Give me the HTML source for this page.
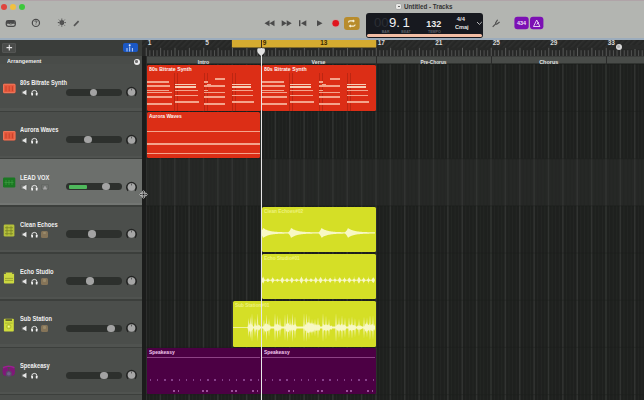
<!DOCTYPE html>
<html><head><meta charset="utf-8"><style>
*{margin:0;padding:0;box-sizing:border-box}
html,body{width:644px;height:400px;overflow:hidden}
body{position:relative;background:#1f211f;font-family:"Liberation Sans",sans-serif}
.a{position:absolute}
.tn{position:absolute;left:20px;font-size:7px;font-weight:bold;color:#f2f2f2;white-space:nowrap;letter-spacing:0}
.btn{position:absolute;width:8px;height:6.5px;border-radius:2px;background:#545554;box-shadow:inset 0 0 0 0.5px #5e5f5e}
.sl{position:absolute;left:66px;width:56px;height:7.5px;border-radius:4px;background:#2d302d}
.kn{position:absolute;width:7.5px;height:7.5px;border-radius:50%;background:#a3a3a3}
.pan{position:absolute;left:126.5px;width:10px;height:10px;border-radius:50%;background:#262626}
.pan i{position:absolute;left:1.5px;top:1.5px;width:7px;height:7px;border-radius:50%;background:#a5a5a5}
.pan b{position:absolute;left:4.5px;top:2px;width:1px;height:2px;background:#555}
.rt{position:absolute;font-size:5.5px;font-weight:bold;white-space:nowrap}
</style></head><body>

<div class="a" style="left:0;top:0;width:644px;height:38px;background:#b3b5b1"></div>
<div class="a" style="left:0;top:0;width:644px;height:1px;background:#b0a4a8"></div>
<div class="a" style="left:0;top:37.6px;width:644px;height:2.4px;background:#9cacbc"></div>
<div class="a" style="left:0;top:39.6px;width:644px;height:0.8px;background:#2c3640"></div>
<div class="a" style="left:1px;top:3.5px;width:6px;height:6px;border-radius:50%;background:#e0443e"></div>
<div class="a" style="left:9.6px;top:3.5px;width:6px;height:6px;border-radius:50%;background:#f2c040"></div>
<div class="a" style="left:18.7px;top:3.5px;width:6px;height:6px;border-radius:50%;background:#3cc83c"></div>
<div class="a" style="left:396.3px;top:3.8px;width:5px;height:5px;border-radius:1.2px;background:#e8e8e6;box-shadow:0 0 0 0.4px #999"></div>
<div class="a" style="left:398px;top:5.5px;width:1.6px;height:1.6px;border-radius:50%;background:#555"></div>
<div class="a" style="left:404.00px;top:3.87px;font-size:6.3px;line-height:1;font-weight:bold;color:#333333;white-space:nowrap;transform:scaleX(0.99);transform-origin:0 0;">Untitled - Tracks</div>
<svg class="a" style="left:0;top:0" width="644" height="38">
<g fill="none" stroke="#4a4a4a" stroke-width="1">
 <rect x="6.3" y="20.6" width="9" height="5.7" rx="1.8" stroke-width="1.3"/>
 <path d="M6.3 23.2 h2.6 q1.9 1.6 3.8 0 h2.6" stroke-width="1.1"/>
 <rect x="6.8" y="20.8" width="8" height="2.2" rx="0.8" fill="#4a4a4a" stroke="none"/>
 <circle cx="35.9" cy="22.9" r="3.6" stroke-width="1.2"/>
 <path d="M34.9 21.8 q0-1 1-1 q1 0 1 0.9 q0 0.6-0.9 1 v0.8 M35.9 24.5 v0.5" stroke-width="0.9"/>
 <circle cx="61.8" cy="22.6" r="2" fill="#555"/>
 <path d="M61.8 18.6 v1.2 M61.8 25.4 v1.2 M57.8 22.6 h1.2 M64.6 22.6 h1.2 M58.9 19.7 l0.8 0.8 M63.9 24.7 l0.8 0.8 M58.9 25.5 l0.8-0.8 M63.9 20.5 l0.8-0.8"/>
 <path d="M74 25.8 l4.6-4.7" stroke-width="1.7" stroke="#555"/>
 <path d="M492.7 26.8 L495.4 24.1 M497.6 19.8 L495.6 23 Q495.6 24.6 497 24 L499.6 22" stroke-width="1.15" stroke="#4e4e4e"/>
</g>
<g fill="#4a4a4a">
 <path d="M264.5 23.2 l5-3 v6z M269.5 23.2 l5-3 v6z"/>
 <path d="M281.7 20.2 l5 3 -5 3z M286.7 20.2 l5 3 -5 3z"/>
 <rect x="299" y="20.2" width="1.4" height="6"/>
 <path d="M306.3 20.2 v6 l-5.3-3z"/>
 <path d="M317 20.2 l5.5 3 -5.5 3z"/>
</g>
<circle cx="335.7" cy="23.3" r="4.2" fill="#cf9a9a" opacity="0.6"/>
<circle cx="335.7" cy="23.3" r="3.3" fill="#e0141e"/>
<rect x="344" y="17" width="15.6" height="13" rx="3" fill="#b88c2c"/>
<g fill="none" stroke="#f6f0d8" stroke-width="1.1">
 <path d="M348.5 22.5 q0-1.6 1.6-1.6 h4 M352.8 19.8 l1.3 1.1 -1.3 1.1"/>
 <path d="M355.1 24.5 q0 1.6 -1.6 1.6 h-4 M350.8 27.2 l-1.3-1.1 1.3-1.1"/>
</g>
<rect x="514.4" y="16.8" width="14.3" height="12.4" rx="3" fill="#7c10b4"/>
<rect x="530" y="16.8" width="13.4" height="12.4" rx="3" fill="#7c10b4"/>
<text x="521.5" y="25.2" font-size="5.4" font-weight="bold" fill="#f0e0f8" text-anchor="middle" font-family="Liberation Sans">434</text>
<g fill="none" stroke="#f0e0f8" stroke-width="0.9"><path d="M533.5 26.5 l3.2-6.5 3.2 6.5z M536.7 24.5 l2-2.5"/></g>
</svg>
<div class="a" style="left:366px;top:13px;width:117px;height:24.5px;border-radius:3px;background:#17191f;overflow:hidden"><div class="a" style="left:0.6px;top:21.3px;width:115.8px;height:2.9px;border-radius:1.5px;background:#f3bea4"></div></div>
<div class="a" style="left:374.00px;top:15.66px;font-size:13.4px;line-height:1;font-weight:normal;color:#2c2f35;white-space:nowrap;transform:scaleX(0.98);transform-origin:0 0;">00</div>
<div class="a" style="left:389.00px;top:15.66px;font-size:13.4px;line-height:1;font-weight:normal;color:#f2f2f2;white-space:nowrap;transform:scaleX(0.98);transform-origin:0 0;">9.&thinsp;1</div>
<div class="a" style="left:381.70px;top:30.55px;font-size:3.6px;line-height:1;font-weight:bold;color:#5c6068;white-space:nowrap;">BAR</div>
<div class="a" style="left:401.30px;top:30.55px;font-size:3.6px;line-height:1;font-weight:bold;color:#5c6068;white-space:nowrap;">BEAT</div>
<div class="a" style="left:426.20px;top:19.58px;font-size:9px;line-height:1;font-weight:bold;color:#ececec;white-space:nowrap;">132</div>
<div class="a" style="left:428.00px;top:30.55px;font-size:3.6px;line-height:1;font-weight:bold;color:#5c6068;white-space:nowrap;">TEMPO</div>
<div class="a" style="left:456.80px;top:17.09px;font-size:5.8px;line-height:1;font-weight:bold;color:#e6e6e6;white-space:nowrap;">4/4</div>
<div class="a" style="left:454.80px;top:23.75px;font-size:6.2px;line-height:1;font-weight:bold;color:#e6e6e6;white-space:nowrap;transform:scaleX(0.9);transform-origin:0 0;">Cmaj</div>
<svg class="a" style="left:476px;top:21px" width="7" height="5"><path d="M1 1 l2.4 2.4 2.4-2.4" fill="none" stroke="#d0d0d0" stroke-width="0.9"/></svg>
<div class="a" style="left:0;top:40px;width:142px;height:16px;background:#3a3d3a"></div>
<div class="a" style="left:2px;top:43px;width:13.5px;height:9.5px;border-radius:2px;background:#4a4c4a;box-shadow:inset 0 0 0 0.6px #5c5e5c"></div>
<svg class="a" style="left:2px;top:43px" width="14" height="10"><path d="M7.3 1.8 v5.6 M4.5 4.6 h5.6" stroke="#e6e6e6" stroke-width="1.1"/></svg>
<div class="a" style="left:122.5px;top:43px;width:15px;height:9px;border-radius:2px;background:#1b58c4"></div>
<svg class="a" style="left:122px;top:43px" width="16" height="10"><circle cx="7.7" cy="2.2" r="1" fill="#e8f0ff"/><path d="M7.7 3.5 v5 M5 5 v3.5 M10.4 5 v3.5" stroke="#cfe0ff" stroke-width="0.9"/></svg>
<div class="a" style="left:0;top:56.3px;width:142px;height:7.5px;background:#494c49"></div>
<div class="a" style="left:6.50px;top:59.01px;font-size:5.9px;line-height:1;font-weight:bold;color:#eeeeee;white-space:nowrap;transform:scaleX(0.94);transform-origin:0 0;">Arrangement</div>
<div class="a" style="left:0;top:63.6px;width:142px;height:1.2px;background:#1e1f1e"></div>
<div class="a" style="left:0;top:64.30px;width:142px;height:47.18px;background:#4b4e4b"></div>
<div class="a" style="left:0;top:108.48px;width:142px;height:2.2px;background:#505350"></div>
<svg class="a" style="left:0;top:0" width="20" height="400"><rect x="3" y="83.69999999999999" width="12.5" height="9.5" rx="1.2" fill="#e65a3e"/><rect x="3.6" y="84.3" width="11.3" height="8.3" rx="0.8" fill="none" stroke="#f08466" stroke-width="0.7"/><path d="M6 86.19999999999999 v5 M9.2 86.19999999999999 v5 M12.4 86.19999999999999 v5" stroke="#c8402a" stroke-width="1"/></svg>
<div class="a" style="left:20.00px;top:80.18px;font-size:6.4px;line-height:1;font-weight:bold;color:#f0f0f0;white-space:nowrap;transform:scaleX(0.9);transform-origin:0 0;">80s Bitrate Synth</div>
<div class="btn" style="left:20px;top:89.4px;background:#4f524f;box-shadow:inset 0 0 0 0.6px #434643"></div><div class="btn" style="left:30.2px;top:89.4px;background:#4f524f;box-shadow:inset 0 0 0 0.6px #434643"></div>
<svg class="a" style="left:20px;top:89.4px" width="20" height="8"><path d="M2.6 2.4 h1.2 l2.6-1.6 v5.4 l-2.6-1.6 h-1.2z" fill="#e8e8e8"/><path d="M11.8 5.2 v-1.2 a2.6 2.6 0 0 1 5.2 0 v1.2" fill="none" stroke="#ececec" stroke-width="0.9"/><rect x="11.3" y="4" width="1.7" height="2.6" rx="0.5" fill="#f4f4f4"/><rect x="15.8" y="4" width="1.7" height="2.6" rx="0.5" fill="#f4f4f4"/></svg>
<div class="sl" style="top:88.6px"></div>
<div class="kn" style="left:89.75px;top:88.6px"></div>
<svg class="a" style="left:125px;top:85.35px" width="13" height="14"><path d="M3.1 10.6 A4.7 4.7 0 1 1 9.9 10.6" fill="none" stroke="#242524" stroke-width="1.7"/><circle cx="6.5" cy="7" r="3.75" fill="#a6a6a6"/><rect x="6" y="3.6" width="1" height="1.8" fill="#5a5a5a"/></svg>
<div class="a" style="left:0;top:111.48px;width:142px;height:47.18px;background:#4b4e4b"></div>
<div class="a" style="left:0;top:155.66px;width:142px;height:2.2px;background:#505350"></div>
<svg class="a" style="left:0;top:0" width="20" height="400"><rect x="3" y="130.88" width="12.5" height="9.5" rx="1.2" fill="#e65a3e"/><rect x="3.6" y="131.48" width="11.3" height="8.3" rx="0.8" fill="none" stroke="#f08466" stroke-width="0.7"/><path d="M6 133.38 v5 M9.2 133.38 v5 M12.4 133.38 v5" stroke="#c8402a" stroke-width="1"/></svg>
<div class="a" style="left:20.00px;top:127.36px;font-size:6.4px;line-height:1;font-weight:bold;color:#f0f0f0;white-space:nowrap;transform:scaleX(0.9);transform-origin:0 0;">Aurora Waves</div>
<div class="btn" style="left:20px;top:136.57999999999998px;background:#4f524f;box-shadow:inset 0 0 0 0.6px #434643"></div><div class="btn" style="left:30.2px;top:136.57999999999998px;background:#4f524f;box-shadow:inset 0 0 0 0.6px #434643"></div>
<svg class="a" style="left:20px;top:136.57999999999998px" width="20" height="8"><path d="M2.6 2.4 h1.2 l2.6-1.6 v5.4 l-2.6-1.6 h-1.2z" fill="#e8e8e8"/><path d="M11.8 5.2 v-1.2 a2.6 2.6 0 0 1 5.2 0 v1.2" fill="none" stroke="#ececec" stroke-width="0.9"/><rect x="11.3" y="4" width="1.7" height="2.6" rx="0.5" fill="#f4f4f4"/><rect x="15.8" y="4" width="1.7" height="2.6" rx="0.5" fill="#f4f4f4"/></svg>
<div class="sl" style="top:135.78px"></div>
<div class="kn" style="left:84.25px;top:135.78px"></div>
<svg class="a" style="left:125px;top:132.53px" width="13" height="14"><path d="M3.1 10.6 A4.7 4.7 0 1 1 9.9 10.6" fill="none" stroke="#242524" stroke-width="1.7"/><circle cx="6.5" cy="7" r="3.75" fill="#a6a6a6"/><rect x="6" y="3.6" width="1" height="1.8" fill="#5a5a5a"/></svg>
<div class="a" style="left:0;top:158.66px;width:142px;height:47.18px;background:#6c6f6c"></div>
<div class="a" style="left:0;top:202.84px;width:142px;height:2.2px;background:#737673"></div>
<svg class="a" style="left:0;top:0" width="20" height="400"><rect x="3" y="177.56" width="12.3" height="10" rx="1.2" fill="#1a7822"/><path d="M6 180.06 v5 M9 180.06 v5 M12 180.06 v5 M4.5 182.56 h9" stroke="#3c9a40" stroke-width="0.8"/></svg>
<div class="a" style="left:20.00px;top:174.54px;font-size:6.4px;line-height:1;font-weight:bold;color:#f0f0f0;white-space:nowrap;transform:scaleX(0.9);transform-origin:0 0;">LEAD VOX</div>
<div class="btn" style="left:20px;top:183.76px;background:#707370;box-shadow:inset 0 0 0 0.6px #5d605d"></div><div class="btn" style="left:30.2px;top:183.76px;background:#707370;box-shadow:inset 0 0 0 0.6px #5d605d"></div>
<svg class="a" style="left:20px;top:183.76px" width="20" height="8"><path d="M2.6 2.4 h1.2 l2.6-1.6 v5.4 l-2.6-1.6 h-1.2z" fill="#e8e8e8"/><path d="M11.8 5.2 v-1.2 a2.6 2.6 0 0 1 5.2 0 v1.2" fill="none" stroke="#ececec" stroke-width="0.9"/><rect x="11.3" y="4" width="1.7" height="2.6" rx="0.5" fill="#f4f4f4"/><rect x="15.8" y="4" width="1.7" height="2.6" rx="0.5" fill="#f4f4f4"/></svg>
<div class="btn" style="left:40.5px;top:183.76px;width:8px;background:#707370;box-shadow:inset 0 0 0 0.6px #5d605d"></div>
<svg class="a" style="left:40.5px;top:183.76px" width="8" height="7"><path d="M2 5.5 h4 l-0.6-2 h-2.8z M3.2 3.5 a0.9 0.9 0 1 1 1.6 0" fill="#a8a8a8"/></svg>
<div class="sl" style="top:182.96px"></div>
<div class="a" style="left:69px;top:184.56px;width:17.5px;height:4.2px;border-radius:1px;background:#4fb85c"></div>
<div class="kn" style="left:102.25px;top:182.96px"></div>
<svg class="a" style="left:125px;top:179.71px" width="13" height="14"><path d="M3.1 10.6 A4.7 4.7 0 1 1 9.9 10.6" fill="none" stroke="#242524" stroke-width="1.7"/><circle cx="6.5" cy="7" r="3.75" fill="#a6a6a6"/><rect x="6" y="3.6" width="1" height="1.8" fill="#5a5a5a"/></svg>
<div class="a" style="left:0;top:205.84px;width:142px;height:47.18px;background:#4b4e4b"></div>
<div class="a" style="left:0;top:250.02px;width:142px;height:2.2px;background:#505350"></div>
<svg class="a" style="left:0;top:0" width="20" height="400"><rect x="3.7" y="224.43999999999997" width="10.7" height="12" rx="1.3" fill="#b4c03a"/><path d="M5 227.73999999999998 h8 M5 230.73999999999998 h8 M5 233.73999999999998 h8 M7 226.23999999999998 v9 M11 226.23999999999998 v9" stroke="#7a8426" stroke-width="0.8"/></svg>
<div class="a" style="left:20.00px;top:221.72px;font-size:6.4px;line-height:1;font-weight:bold;color:#f0f0f0;white-space:nowrap;transform:scaleX(0.9);transform-origin:0 0;">Clean Echoes</div>
<div class="btn" style="left:20px;top:230.93999999999997px;background:#4f524f;box-shadow:inset 0 0 0 0.6px #434643"></div><div class="btn" style="left:30.2px;top:230.93999999999997px;background:#4f524f;box-shadow:inset 0 0 0 0.6px #434643"></div>
<svg class="a" style="left:20px;top:230.93999999999997px" width="20" height="8"><path d="M2.6 2.4 h1.2 l2.6-1.6 v5.4 l-2.6-1.6 h-1.2z" fill="#e8e8e8"/><path d="M11.8 5.2 v-1.2 a2.6 2.6 0 0 1 5.2 0 v1.2" fill="none" stroke="#ececec" stroke-width="0.9"/><rect x="11.3" y="4" width="1.7" height="2.6" rx="0.5" fill="#f4f4f4"/><rect x="15.8" y="4" width="1.7" height="2.6" rx="0.5" fill="#f4f4f4"/></svg>
<div class="a" style="left:40.5px;top:230.63999999999996px;width:7.5px;height:7px;border-radius:1.5px;background:#857458"></div>
<div class="a" style="left:42.5px;top:231.93999999999997px;width:3.5px;height:2.5px;border-radius:1px;background:#9a8a6a"></div>
<div class="sl" style="top:230.14px"></div>
<div class="kn" style="left:88.25px;top:230.14px"></div>
<svg class="a" style="left:125px;top:226.89px" width="13" height="14"><path d="M3.1 10.6 A4.7 4.7 0 1 1 9.9 10.6" fill="none" stroke="#242524" stroke-width="1.7"/><circle cx="6.5" cy="7" r="3.75" fill="#a6a6a6"/><rect x="6" y="3.6" width="1" height="1.8" fill="#5a5a5a"/></svg>
<div class="a" style="left:0;top:253.02px;width:142px;height:47.18px;background:#4b4e4b"></div>
<div class="a" style="left:0;top:297.20px;width:142px;height:2.2px;background:#505350"></div>
<svg class="a" style="left:0;top:0" width="20" height="400"><rect x="3.9" y="272.41999999999996" width="10.2" height="11" rx="1" fill="#ccd840"/><rect x="3.9" y="272.41999999999996" width="2" height="1.4" fill="#4a4b4a"/><rect x="12.1" y="272.41999999999996" width="2" height="1.4" fill="#4a4b4a"/><path d="M5 278.41999999999996 h8 M5 280.41999999999996 h8" stroke="#9aa42e" stroke-width="0.9"/></svg>
<div class="a" style="left:20.00px;top:268.90px;font-size:6.4px;line-height:1;font-weight:bold;color:#f0f0f0;white-space:nowrap;transform:scaleX(0.9);transform-origin:0 0;">Echo Studio</div>
<div class="btn" style="left:20px;top:278.12px;background:#4f524f;box-shadow:inset 0 0 0 0.6px #434643"></div><div class="btn" style="left:30.2px;top:278.12px;background:#4f524f;box-shadow:inset 0 0 0 0.6px #434643"></div>
<svg class="a" style="left:20px;top:278.12px" width="20" height="8"><path d="M2.6 2.4 h1.2 l2.6-1.6 v5.4 l-2.6-1.6 h-1.2z" fill="#e8e8e8"/><path d="M11.8 5.2 v-1.2 a2.6 2.6 0 0 1 5.2 0 v1.2" fill="none" stroke="#ececec" stroke-width="0.9"/><rect x="11.3" y="4" width="1.7" height="2.6" rx="0.5" fill="#f4f4f4"/><rect x="15.8" y="4" width="1.7" height="2.6" rx="0.5" fill="#f4f4f4"/></svg>
<div class="a" style="left:40.5px;top:277.82px;width:7.5px;height:7px;border-radius:1.5px;background:#857458"></div>
<div class="a" style="left:42.5px;top:279.12px;width:3.5px;height:2.5px;border-radius:1px;background:#9a8a6a"></div>
<div class="sl" style="top:277.32px"></div>
<div class="kn" style="left:86.25px;top:277.32px"></div>
<svg class="a" style="left:125px;top:274.07px" width="13" height="14"><path d="M3.1 10.6 A4.7 4.7 0 1 1 9.9 10.6" fill="none" stroke="#242524" stroke-width="1.7"/><circle cx="6.5" cy="7" r="3.75" fill="#a6a6a6"/><rect x="6" y="3.6" width="1" height="1.8" fill="#5a5a5a"/></svg>
<div class="a" style="left:0;top:300.20px;width:142px;height:47.18px;background:#4b4e4b"></div>
<div class="a" style="left:0;top:344.38px;width:142px;height:2.2px;background:#505350"></div>
<svg class="a" style="left:0;top:0" width="20" height="400"><rect x="3.9" y="318.7" width="9.9" height="12.9" rx="0.8" fill="#d0dc3c"/><rect x="5.5" y="319.4" width="6.5" height="1.3" fill="#3a3a20"/><path d="M5 323.09999999999997 h7.5" stroke="#9aa42e" stroke-width="0.7"/><circle cx="8.8" cy="326.59999999999997" r="2.2" fill="none" stroke="#a4ae30" stroke-width="0.7"/><circle cx="8.8" cy="326.59999999999997" r="0.9" fill="#f0f8a0"/></svg>
<div class="a" style="left:20.00px;top:316.08px;font-size:6.4px;line-height:1;font-weight:bold;color:#f0f0f0;white-space:nowrap;transform:scaleX(0.9);transform-origin:0 0;">Sub Station</div>
<div class="btn" style="left:20px;top:325.3px;background:#4f524f;box-shadow:inset 0 0 0 0.6px #434643"></div><div class="btn" style="left:30.2px;top:325.3px;background:#4f524f;box-shadow:inset 0 0 0 0.6px #434643"></div>
<svg class="a" style="left:20px;top:325.3px" width="20" height="8"><path d="M2.6 2.4 h1.2 l2.6-1.6 v5.4 l-2.6-1.6 h-1.2z" fill="#e8e8e8"/><path d="M11.8 5.2 v-1.2 a2.6 2.6 0 0 1 5.2 0 v1.2" fill="none" stroke="#ececec" stroke-width="0.9"/><rect x="11.3" y="4" width="1.7" height="2.6" rx="0.5" fill="#f4f4f4"/><rect x="15.8" y="4" width="1.7" height="2.6" rx="0.5" fill="#f4f4f4"/></svg>
<div class="a" style="left:40.5px;top:325.0px;width:7.5px;height:7px;border-radius:1.5px;background:#857458"></div>
<div class="a" style="left:42.5px;top:326.3px;width:3.5px;height:2.5px;border-radius:1px;background:#9a8a6a"></div>
<div class="sl" style="top:324.5px"></div>
<div class="kn" style="left:107.25px;top:324.5px"></div>
<svg class="a" style="left:125px;top:321.25px" width="13" height="14"><path d="M3.1 10.6 A4.7 4.7 0 1 1 9.9 10.6" fill="none" stroke="#242524" stroke-width="1.7"/><circle cx="6.5" cy="7" r="3.75" fill="#a6a6a6"/><rect x="6" y="3.6" width="1" height="1.8" fill="#5a5a5a"/></svg>
<div class="a" style="left:0;top:347.38px;width:142px;height:47.18px;background:#4b4e4b"></div>
<div class="a" style="left:0;top:391.56px;width:142px;height:2.2px;background:#505350"></div>
<svg class="a" style="left:0;top:0" width="20" height="400"><ellipse cx="5.5" cy="371.28" rx="3" ry="4.5" fill="#801878"/><ellipse cx="12" cy="371.28" rx="3" ry="4.5" fill="#801878"/><path d="M3 367.78 q5.7-3 11.5 0" stroke="#9a2290" stroke-width="1.6" fill="none"/><circle cx="8.8" cy="373.78" r="3" fill="#5a4a6a"/><circle cx="8.8" cy="373.78" r="1.8" fill="#70608a"/></svg>
<div class="a" style="left:20.00px;top:363.26px;font-size:6.4px;line-height:1;font-weight:bold;color:#f0f0f0;white-space:nowrap;transform:scaleX(0.9);transform-origin:0 0;">Speakeasy</div>
<div class="btn" style="left:20px;top:372.48px;background:#4f524f;box-shadow:inset 0 0 0 0.6px #434643"></div><div class="btn" style="left:30.2px;top:372.48px;background:#4f524f;box-shadow:inset 0 0 0 0.6px #434643"></div>
<svg class="a" style="left:20px;top:372.48px" width="20" height="8"><path d="M2.6 2.4 h1.2 l2.6-1.6 v5.4 l-2.6-1.6 h-1.2z" fill="#e8e8e8"/><path d="M11.8 5.2 v-1.2 a2.6 2.6 0 0 1 5.2 0 v1.2" fill="none" stroke="#ececec" stroke-width="0.9"/><rect x="11.3" y="4" width="1.7" height="2.6" rx="0.5" fill="#f4f4f4"/><rect x="15.8" y="4" width="1.7" height="2.6" rx="0.5" fill="#f4f4f4"/></svg>
<div class="sl" style="top:371.68px"></div>
<div class="kn" style="left:100.25px;top:371.68px"></div>
<svg class="a" style="left:125px;top:368.43px" width="13" height="14"><path d="M3.1 10.6 A4.7 4.7 0 1 1 9.9 10.6" fill="none" stroke="#242524" stroke-width="1.7"/><circle cx="6.5" cy="7" r="3.75" fill="#a6a6a6"/><rect x="6" y="3.6" width="1" height="1.8" fill="#5a5a5a"/></svg>
<div class="a" style="left:133.6px;top:58.5px;width:6px;height:6px;border-radius:50%;background:#ececec"></div>
<div class="a" style="left:135.4px;top:60.3px;width:2.4px;height:2.4px;border-radius:50%;background:#707070"></div>
<div class="a" style="left:0;top:110.68px;width:142px;height:1.6px;background:#3c3f3c"></div>
<div class="a" style="left:0;top:157.86px;width:142px;height:1.6px;background:#3c3f3c"></div>
<div class="a" style="left:0;top:205.04px;width:142px;height:1.6px;background:#3c3f3c"></div>
<div class="a" style="left:0;top:252.22px;width:142px;height:1.6px;background:#3c3f3c"></div>
<div class="a" style="left:0;top:299.40px;width:142px;height:1.6px;background:#3c3f3c"></div>
<div class="a" style="left:0;top:346.58px;width:142px;height:1.6px;background:#3c3f3c"></div>
<div class="a" style="left:0;top:393.76px;width:142px;height:1.6px;background:#3c3f3c"></div>
<div class="a" style="left:0;top:394.56px;width:142px;height:10px;background:#4b4e4b"></div>
<div class="a" style="left:142px;top:40px;width:4.25px;height:360px;background:#1b1c1b"></div>
<svg class="a" style="left:142px;top:40px" width="502" height="24">
<defs><pattern id="hatch" width="4" height="4" patternUnits="userSpaceOnUse" patternTransform="rotate(45)"><rect width="4" height="4" fill="#262726"/><rect width="1.6" height="4" fill="#2e2f2e"/></pattern></defs>
<rect x="0" y="0" width="502" height="16" fill="#272827"/>
<rect x="0" y="0" width="502" height="7.5" fill="url(#hatch)"/>
<rect x="89.9" y="0" width="144.35" height="7.5" fill="#d5ab30"/>
<rect x="3.75" y="7.8" width="1" height="8.2" fill="#595a59"/>
<rect x="7.34" y="10.2" width="1" height="5.8" fill="#525352"/>
<rect x="10.94" y="10.2" width="1" height="5.8" fill="#525352"/>
<rect x="14.53" y="10.2" width="1" height="5.8" fill="#525352"/>
<rect x="18.12" y="7.8" width="1" height="8.2" fill="#595a59"/>
<rect x="21.72" y="10.2" width="1" height="5.8" fill="#525352"/>
<rect x="25.31" y="10.2" width="1" height="5.8" fill="#525352"/>
<rect x="28.91" y="10.2" width="1" height="5.8" fill="#525352"/>
<rect x="32.50" y="7.8" width="1" height="8.2" fill="#595a59"/>
<rect x="36.09" y="10.2" width="1" height="5.8" fill="#525352"/>
<rect x="39.69" y="10.2" width="1" height="5.8" fill="#525352"/>
<rect x="43.28" y="10.2" width="1" height="5.8" fill="#525352"/>
<rect x="46.88" y="7.8" width="1" height="8.2" fill="#595a59"/>
<rect x="50.47" y="10.2" width="1" height="5.8" fill="#525352"/>
<rect x="54.06" y="10.2" width="1" height="5.8" fill="#525352"/>
<rect x="57.66" y="10.2" width="1" height="5.8" fill="#525352"/>
<rect x="61.25" y="7.8" width="1" height="8.2" fill="#595a59"/>
<rect x="64.84" y="10.2" width="1" height="5.8" fill="#525352"/>
<rect x="68.44" y="10.2" width="1" height="5.8" fill="#525352"/>
<rect x="72.03" y="10.2" width="1" height="5.8" fill="#525352"/>
<rect x="75.62" y="7.8" width="1" height="8.2" fill="#595a59"/>
<rect x="79.22" y="10.2" width="1" height="5.8" fill="#525352"/>
<rect x="82.81" y="10.2" width="1" height="5.8" fill="#525352"/>
<rect x="86.41" y="10.2" width="1" height="5.8" fill="#525352"/>
<rect x="90.00" y="7.8" width="1" height="8.2" fill="#595a59"/>
<rect x="93.59" y="10.2" width="1" height="5.8" fill="#525352"/>
<rect x="97.19" y="10.2" width="1" height="5.8" fill="#525352"/>
<rect x="100.78" y="10.2" width="1" height="5.8" fill="#525352"/>
<rect x="104.38" y="7.8" width="1" height="8.2" fill="#595a59"/>
<rect x="107.97" y="10.2" width="1" height="5.8" fill="#525352"/>
<rect x="111.56" y="10.2" width="1" height="5.8" fill="#525352"/>
<rect x="115.16" y="10.2" width="1" height="5.8" fill="#525352"/>
<rect x="118.75" y="7.8" width="1" height="8.2" fill="#595a59"/>
<rect x="122.34" y="10.2" width="1" height="5.8" fill="#525352"/>
<rect x="125.94" y="10.2" width="1" height="5.8" fill="#525352"/>
<rect x="129.53" y="10.2" width="1" height="5.8" fill="#525352"/>
<rect x="133.12" y="7.8" width="1" height="8.2" fill="#595a59"/>
<rect x="136.72" y="10.2" width="1" height="5.8" fill="#525352"/>
<rect x="140.31" y="10.2" width="1" height="5.8" fill="#525352"/>
<rect x="143.91" y="10.2" width="1" height="5.8" fill="#525352"/>
<rect x="147.50" y="7.8" width="1" height="8.2" fill="#595a59"/>
<rect x="151.09" y="10.2" width="1" height="5.8" fill="#525352"/>
<rect x="154.69" y="10.2" width="1" height="5.8" fill="#525352"/>
<rect x="158.28" y="10.2" width="1" height="5.8" fill="#525352"/>
<rect x="161.88" y="7.8" width="1" height="8.2" fill="#595a59"/>
<rect x="165.47" y="10.2" width="1" height="5.8" fill="#525352"/>
<rect x="169.06" y="10.2" width="1" height="5.8" fill="#525352"/>
<rect x="172.66" y="10.2" width="1" height="5.8" fill="#525352"/>
<rect x="176.25" y="7.8" width="1" height="8.2" fill="#595a59"/>
<rect x="179.84" y="10.2" width="1" height="5.8" fill="#525352"/>
<rect x="183.44" y="10.2" width="1" height="5.8" fill="#525352"/>
<rect x="187.03" y="10.2" width="1" height="5.8" fill="#525352"/>
<rect x="190.62" y="7.8" width="1" height="8.2" fill="#595a59"/>
<rect x="194.22" y="10.2" width="1" height="5.8" fill="#525352"/>
<rect x="197.81" y="10.2" width="1" height="5.8" fill="#525352"/>
<rect x="201.41" y="10.2" width="1" height="5.8" fill="#525352"/>
<rect x="205.00" y="7.8" width="1" height="8.2" fill="#595a59"/>
<rect x="208.59" y="10.2" width="1" height="5.8" fill="#525352"/>
<rect x="212.19" y="10.2" width="1" height="5.8" fill="#525352"/>
<rect x="215.78" y="10.2" width="1" height="5.8" fill="#525352"/>
<rect x="219.38" y="7.8" width="1" height="8.2" fill="#595a59"/>
<rect x="222.97" y="10.2" width="1" height="5.8" fill="#525352"/>
<rect x="226.56" y="10.2" width="1" height="5.8" fill="#525352"/>
<rect x="230.16" y="10.2" width="1" height="5.8" fill="#525352"/>
<rect x="233.75" y="7.8" width="1" height="8.2" fill="#595a59"/>
<rect x="237.34" y="10.2" width="1" height="5.8" fill="#525352"/>
<rect x="240.94" y="10.2" width="1" height="5.8" fill="#525352"/>
<rect x="244.53" y="10.2" width="1" height="5.8" fill="#525352"/>
<rect x="248.12" y="7.8" width="1" height="8.2" fill="#595a59"/>
<rect x="251.72" y="10.2" width="1" height="5.8" fill="#525352"/>
<rect x="255.31" y="10.2" width="1" height="5.8" fill="#525352"/>
<rect x="258.91" y="10.2" width="1" height="5.8" fill="#525352"/>
<rect x="262.50" y="7.8" width="1" height="8.2" fill="#595a59"/>
<rect x="266.09" y="10.2" width="1" height="5.8" fill="#525352"/>
<rect x="269.69" y="10.2" width="1" height="5.8" fill="#525352"/>
<rect x="273.28" y="10.2" width="1" height="5.8" fill="#525352"/>
<rect x="276.88" y="7.8" width="1" height="8.2" fill="#595a59"/>
<rect x="280.47" y="10.2" width="1" height="5.8" fill="#525352"/>
<rect x="284.06" y="10.2" width="1" height="5.8" fill="#525352"/>
<rect x="287.66" y="10.2" width="1" height="5.8" fill="#525352"/>
<rect x="291.25" y="7.8" width="1" height="8.2" fill="#595a59"/>
<rect x="294.84" y="10.2" width="1" height="5.8" fill="#525352"/>
<rect x="298.44" y="10.2" width="1" height="5.8" fill="#525352"/>
<rect x="302.03" y="10.2" width="1" height="5.8" fill="#525352"/>
<rect x="305.62" y="7.8" width="1" height="8.2" fill="#595a59"/>
<rect x="309.22" y="10.2" width="1" height="5.8" fill="#525352"/>
<rect x="312.81" y="10.2" width="1" height="5.8" fill="#525352"/>
<rect x="316.41" y="10.2" width="1" height="5.8" fill="#525352"/>
<rect x="320.00" y="7.8" width="1" height="8.2" fill="#595a59"/>
<rect x="323.59" y="10.2" width="1" height="5.8" fill="#525352"/>
<rect x="327.19" y="10.2" width="1" height="5.8" fill="#525352"/>
<rect x="330.78" y="10.2" width="1" height="5.8" fill="#525352"/>
<rect x="334.38" y="7.8" width="1" height="8.2" fill="#595a59"/>
<rect x="337.97" y="10.2" width="1" height="5.8" fill="#525352"/>
<rect x="341.56" y="10.2" width="1" height="5.8" fill="#525352"/>
<rect x="345.16" y="10.2" width="1" height="5.8" fill="#525352"/>
<rect x="348.75" y="7.8" width="1" height="8.2" fill="#595a59"/>
<rect x="352.34" y="10.2" width="1" height="5.8" fill="#525352"/>
<rect x="355.94" y="10.2" width="1" height="5.8" fill="#525352"/>
<rect x="359.53" y="10.2" width="1" height="5.8" fill="#525352"/>
<rect x="363.12" y="7.8" width="1" height="8.2" fill="#595a59"/>
<rect x="366.72" y="10.2" width="1" height="5.8" fill="#525352"/>
<rect x="370.31" y="10.2" width="1" height="5.8" fill="#525352"/>
<rect x="373.91" y="10.2" width="1" height="5.8" fill="#525352"/>
<rect x="377.50" y="7.8" width="1" height="8.2" fill="#595a59"/>
<rect x="381.09" y="10.2" width="1" height="5.8" fill="#525352"/>
<rect x="384.69" y="10.2" width="1" height="5.8" fill="#525352"/>
<rect x="388.28" y="10.2" width="1" height="5.8" fill="#525352"/>
<rect x="391.88" y="7.8" width="1" height="8.2" fill="#595a59"/>
<rect x="395.47" y="10.2" width="1" height="5.8" fill="#525352"/>
<rect x="399.06" y="10.2" width="1" height="5.8" fill="#525352"/>
<rect x="402.66" y="10.2" width="1" height="5.8" fill="#525352"/>
<rect x="406.25" y="7.8" width="1" height="8.2" fill="#595a59"/>
<rect x="409.84" y="10.2" width="1" height="5.8" fill="#525352"/>
<rect x="413.44" y="10.2" width="1" height="5.8" fill="#525352"/>
<rect x="417.03" y="10.2" width="1" height="5.8" fill="#525352"/>
<rect x="420.62" y="7.8" width="1" height="8.2" fill="#595a59"/>
<rect x="424.22" y="10.2" width="1" height="5.8" fill="#525352"/>
<rect x="427.81" y="10.2" width="1" height="5.8" fill="#525352"/>
<rect x="431.41" y="10.2" width="1" height="5.8" fill="#525352"/>
<rect x="435.00" y="7.8" width="1" height="8.2" fill="#595a59"/>
<rect x="438.59" y="10.2" width="1" height="5.8" fill="#525352"/>
<rect x="442.19" y="10.2" width="1" height="5.8" fill="#525352"/>
<rect x="445.78" y="10.2" width="1" height="5.8" fill="#525352"/>
<rect x="449.38" y="7.8" width="1" height="8.2" fill="#595a59"/>
<rect x="452.97" y="10.2" width="1" height="5.8" fill="#525352"/>
<rect x="456.56" y="10.2" width="1" height="5.8" fill="#525352"/>
<rect x="460.16" y="10.2" width="1" height="5.8" fill="#525352"/>
<rect x="463.75" y="7.8" width="1" height="8.2" fill="#595a59"/>
<rect x="467.34" y="10.2" width="1" height="5.8" fill="#525352"/>
<rect x="470.94" y="10.2" width="1" height="5.8" fill="#525352"/>
<rect x="474.53" y="10.2" width="1" height="5.8" fill="#525352"/>
<rect x="478.12" y="7.8" width="1" height="8.2" fill="#595a59"/>
<rect x="481.72" y="10.2" width="1" height="5.8" fill="#525352"/>
<rect x="485.31" y="10.2" width="1" height="5.8" fill="#525352"/>
<rect x="488.91" y="10.2" width="1" height="5.8" fill="#525352"/>
<rect x="492.50" y="7.8" width="1" height="8.2" fill="#595a59"/>
<rect x="496.09" y="10.2" width="1" height="5.8" fill="#525352"/>
<rect x="499.69" y="10.2" width="1" height="5.8" fill="#525352"/>
<rect x="4.25" y="16.3" width="498" height="7.5" fill="#494c49"/>
<rect x="0" y="16" width="4.25" height="8" fill="#1b1c1b"/>
<rect x="4.25" y="23.6" width="498" height="1" fill="#1e1f1e"/>
</svg>
<div class="a" style="left:147.75px;top:39.2px;font-size:6.5px;font-weight:bold;color:#d8d8d8">1</div>
<div class="a" style="left:205.25px;top:39.2px;font-size:6.5px;font-weight:bold;color:#d8d8d8">5</div>
<div class="a" style="left:262.75px;top:39.2px;font-size:6.5px;font-weight:bold;color:#3a2a00">9</div>
<div class="a" style="left:320.25px;top:39.2px;font-size:6.5px;font-weight:bold;color:#3a2a00">13</div>
<div class="a" style="left:377.75px;top:39.2px;font-size:6.5px;font-weight:bold;color:#d8d8d8">17</div>
<div class="a" style="left:435.25px;top:39.2px;font-size:6.5px;font-weight:bold;color:#d8d8d8">21</div>
<div class="a" style="left:492.75px;top:39.2px;font-size:6.5px;font-weight:bold;color:#d8d8d8">25</div>
<div class="a" style="left:550.25px;top:39.2px;font-size:6.5px;font-weight:bold;color:#d8d8d8">29</div>
<div class="a" style="left:607.75px;top:39.2px;font-size:6.5px;font-weight:bold;color:#d8d8d8">33</div>
<div class="a" style="left:145.75px;top:56px;width:1px;height:8px;background:#2a2b2a"></div>
<div class="a" style="left:146.25px;top:59.94px;width:115px;text-align:center;font-size:5.5px;line-height:1;font-weight:bold;color:#e2e2e2;transform:scaleX(0.95);transform-origin:57.5px 0">Intro</div>
<div class="a" style="left:260.75px;top:56px;width:1px;height:8px;background:#2a2b2a"></div>
<div class="a" style="left:261.25px;top:59.94px;width:115px;text-align:center;font-size:5.5px;line-height:1;font-weight:bold;color:#e2e2e2;transform:scaleX(0.95);transform-origin:57.5px 0">Verse</div>
<div class="a" style="left:375.75px;top:56px;width:1px;height:8px;background:#2a2b2a"></div>
<div class="a" style="left:376.25px;top:59.94px;width:115px;text-align:center;font-size:5.5px;line-height:1;font-weight:bold;color:#e2e2e2;transform:scaleX(0.87);transform-origin:57.5px 0">Pre-Chorus</div>
<div class="a" style="left:490.75px;top:56px;width:1px;height:8px;background:#2a2b2a"></div>
<div class="a" style="left:491.25px;top:59.94px;width:115px;text-align:center;font-size:5.5px;line-height:1;font-weight:bold;color:#e2e2e2;transform:scaleX(1.0);transform-origin:57.5px 0">Chorus</div>
<div class="a" style="left:605.75px;top:56px;width:1px;height:8px;background:#2a2b2a"></div>
<div class="a" style="left:622px;top:44.6px;width:22px;height:4px;background:#2a2b2a"></div>
<div class="a" style="left:615.9px;top:43.6px;width:6px;height:6px;border-radius:50%;background:#d8d8d8"></div>
<div class="a" style="left:617.4px;top:45.1px;width:3px;height:3px;border-radius:50%;background:#b0b0b0"></div>
<svg class="a" style="left:146.25px;top:64px" width="498" height="336">
<rect x="0" y="0" width="498" height="336" fill="#1e201e"/>
<rect x="0" y="94.66" width="498" height="47.18" fill="#262826"/>
<rect x="-0.80" y="0" width="1.6" height="336" fill="#313331"/>
<rect x="3.09" y="0" width="1" height="336" fill="#252725"/>
<rect x="6.69" y="0" width="1" height="336" fill="#252725"/>
<rect x="10.28" y="0" width="1" height="336" fill="#252725"/>
<rect x="13.57" y="0" width="1.6" height="336" fill="#313331"/>
<rect x="17.47" y="0" width="1" height="336" fill="#252725"/>
<rect x="21.06" y="0" width="1" height="336" fill="#252725"/>
<rect x="24.66" y="0" width="1" height="336" fill="#252725"/>
<rect x="27.95" y="0" width="1.6" height="336" fill="#313331"/>
<rect x="31.84" y="0" width="1" height="336" fill="#252725"/>
<rect x="35.44" y="0" width="1" height="336" fill="#252725"/>
<rect x="39.03" y="0" width="1" height="336" fill="#252725"/>
<rect x="42.33" y="0" width="1.6" height="336" fill="#313331"/>
<rect x="46.22" y="0" width="1" height="336" fill="#252725"/>
<rect x="49.81" y="0" width="1" height="336" fill="#252725"/>
<rect x="53.41" y="0" width="1" height="336" fill="#252725"/>
<rect x="56.70" y="0" width="1.6" height="336" fill="#313331"/>
<rect x="60.59" y="0" width="1" height="336" fill="#252725"/>
<rect x="64.19" y="0" width="1" height="336" fill="#252725"/>
<rect x="67.78" y="0" width="1" height="336" fill="#252725"/>
<rect x="71.08" y="0" width="1.6" height="336" fill="#313331"/>
<rect x="74.97" y="0" width="1" height="336" fill="#252725"/>
<rect x="78.56" y="0" width="1" height="336" fill="#252725"/>
<rect x="82.16" y="0" width="1" height="336" fill="#252725"/>
<rect x="85.45" y="0" width="1.6" height="336" fill="#313331"/>
<rect x="89.34" y="0" width="1" height="336" fill="#252725"/>
<rect x="92.94" y="0" width="1" height="336" fill="#252725"/>
<rect x="96.53" y="0" width="1" height="336" fill="#252725"/>
<rect x="99.83" y="0" width="1.6" height="336" fill="#313331"/>
<rect x="103.72" y="0" width="1" height="336" fill="#252725"/>
<rect x="107.31" y="0" width="1" height="336" fill="#252725"/>
<rect x="110.91" y="0" width="1" height="336" fill="#252725"/>
<rect x="114.20" y="0" width="1.6" height="336" fill="#313331"/>
<rect x="118.09" y="0" width="1" height="336" fill="#252725"/>
<rect x="121.69" y="0" width="1" height="336" fill="#252725"/>
<rect x="125.28" y="0" width="1" height="336" fill="#252725"/>
<rect x="128.57" y="0" width="1.6" height="336" fill="#313331"/>
<rect x="132.47" y="0" width="1" height="336" fill="#252725"/>
<rect x="136.06" y="0" width="1" height="336" fill="#252725"/>
<rect x="139.66" y="0" width="1" height="336" fill="#252725"/>
<rect x="142.95" y="0" width="1.6" height="336" fill="#313331"/>
<rect x="146.84" y="0" width="1" height="336" fill="#252725"/>
<rect x="150.44" y="0" width="1" height="336" fill="#252725"/>
<rect x="154.03" y="0" width="1" height="336" fill="#252725"/>
<rect x="157.32" y="0" width="1.6" height="336" fill="#313331"/>
<rect x="161.22" y="0" width="1" height="336" fill="#252725"/>
<rect x="164.81" y="0" width="1" height="336" fill="#252725"/>
<rect x="168.41" y="0" width="1" height="336" fill="#252725"/>
<rect x="171.70" y="0" width="1.6" height="336" fill="#313331"/>
<rect x="175.59" y="0" width="1" height="336" fill="#252725"/>
<rect x="179.19" y="0" width="1" height="336" fill="#252725"/>
<rect x="182.78" y="0" width="1" height="336" fill="#252725"/>
<rect x="186.07" y="0" width="1.6" height="336" fill="#313331"/>
<rect x="189.97" y="0" width="1" height="336" fill="#252725"/>
<rect x="193.56" y="0" width="1" height="336" fill="#252725"/>
<rect x="197.16" y="0" width="1" height="336" fill="#252725"/>
<rect x="200.45" y="0" width="1.6" height="336" fill="#313331"/>
<rect x="204.34" y="0" width="1" height="336" fill="#252725"/>
<rect x="207.94" y="0" width="1" height="336" fill="#252725"/>
<rect x="211.53" y="0" width="1" height="336" fill="#252725"/>
<rect x="214.82" y="0" width="1.6" height="336" fill="#313331"/>
<rect x="218.72" y="0" width="1" height="336" fill="#252725"/>
<rect x="222.31" y="0" width="1" height="336" fill="#252725"/>
<rect x="225.91" y="0" width="1" height="336" fill="#252725"/>
<rect x="229.20" y="0" width="1.6" height="336" fill="#313331"/>
<rect x="233.09" y="0" width="1" height="336" fill="#252725"/>
<rect x="236.69" y="0" width="1" height="336" fill="#252725"/>
<rect x="240.28" y="0" width="1" height="336" fill="#252725"/>
<rect x="243.57" y="0" width="1.6" height="336" fill="#313331"/>
<rect x="247.47" y="0" width="1" height="336" fill="#252725"/>
<rect x="251.06" y="0" width="1" height="336" fill="#252725"/>
<rect x="254.66" y="0" width="1" height="336" fill="#252725"/>
<rect x="257.95" y="0" width="1.6" height="336" fill="#313331"/>
<rect x="261.84" y="0" width="1" height="336" fill="#252725"/>
<rect x="265.44" y="0" width="1" height="336" fill="#252725"/>
<rect x="269.03" y="0" width="1" height="336" fill="#252725"/>
<rect x="272.32" y="0" width="1.6" height="336" fill="#313331"/>
<rect x="276.22" y="0" width="1" height="336" fill="#252725"/>
<rect x="279.81" y="0" width="1" height="336" fill="#252725"/>
<rect x="283.41" y="0" width="1" height="336" fill="#252725"/>
<rect x="286.70" y="0" width="1.6" height="336" fill="#313331"/>
<rect x="290.59" y="0" width="1" height="336" fill="#252725"/>
<rect x="294.19" y="0" width="1" height="336" fill="#252725"/>
<rect x="297.78" y="0" width="1" height="336" fill="#252725"/>
<rect x="301.07" y="0" width="1.6" height="336" fill="#313331"/>
<rect x="304.97" y="0" width="1" height="336" fill="#252725"/>
<rect x="308.56" y="0" width="1" height="336" fill="#252725"/>
<rect x="312.16" y="0" width="1" height="336" fill="#252725"/>
<rect x="315.45" y="0" width="1.6" height="336" fill="#313331"/>
<rect x="319.34" y="0" width="1" height="336" fill="#252725"/>
<rect x="322.94" y="0" width="1" height="336" fill="#252725"/>
<rect x="326.53" y="0" width="1" height="336" fill="#252725"/>
<rect x="329.82" y="0" width="1.6" height="336" fill="#313331"/>
<rect x="333.72" y="0" width="1" height="336" fill="#252725"/>
<rect x="337.31" y="0" width="1" height="336" fill="#252725"/>
<rect x="340.91" y="0" width="1" height="336" fill="#252725"/>
<rect x="344.20" y="0" width="1.6" height="336" fill="#313331"/>
<rect x="348.09" y="0" width="1" height="336" fill="#252725"/>
<rect x="351.69" y="0" width="1" height="336" fill="#252725"/>
<rect x="355.28" y="0" width="1" height="336" fill="#252725"/>
<rect x="358.57" y="0" width="1.6" height="336" fill="#313331"/>
<rect x="362.47" y="0" width="1" height="336" fill="#252725"/>
<rect x="366.06" y="0" width="1" height="336" fill="#252725"/>
<rect x="369.66" y="0" width="1" height="336" fill="#252725"/>
<rect x="372.95" y="0" width="1.6" height="336" fill="#313331"/>
<rect x="376.84" y="0" width="1" height="336" fill="#252725"/>
<rect x="380.44" y="0" width="1" height="336" fill="#252725"/>
<rect x="384.03" y="0" width="1" height="336" fill="#252725"/>
<rect x="387.32" y="0" width="1.6" height="336" fill="#313331"/>
<rect x="391.22" y="0" width="1" height="336" fill="#252725"/>
<rect x="394.81" y="0" width="1" height="336" fill="#252725"/>
<rect x="398.41" y="0" width="1" height="336" fill="#252725"/>
<rect x="401.70" y="0" width="1.6" height="336" fill="#313331"/>
<rect x="405.59" y="0" width="1" height="336" fill="#252725"/>
<rect x="409.19" y="0" width="1" height="336" fill="#252725"/>
<rect x="412.78" y="0" width="1" height="336" fill="#252725"/>
<rect x="416.07" y="0" width="1.6" height="336" fill="#313331"/>
<rect x="419.97" y="0" width="1" height="336" fill="#252725"/>
<rect x="423.56" y="0" width="1" height="336" fill="#252725"/>
<rect x="427.16" y="0" width="1" height="336" fill="#252725"/>
<rect x="430.45" y="0" width="1.6" height="336" fill="#313331"/>
<rect x="434.34" y="0" width="1" height="336" fill="#252725"/>
<rect x="437.94" y="0" width="1" height="336" fill="#252725"/>
<rect x="441.53" y="0" width="1" height="336" fill="#252725"/>
<rect x="444.82" y="0" width="1.6" height="336" fill="#313331"/>
<rect x="448.72" y="0" width="1" height="336" fill="#252725"/>
<rect x="452.31" y="0" width="1" height="336" fill="#252725"/>
<rect x="455.91" y="0" width="1" height="336" fill="#252725"/>
<rect x="459.20" y="0" width="1.6" height="336" fill="#313331"/>
<rect x="463.09" y="0" width="1" height="336" fill="#252725"/>
<rect x="466.69" y="0" width="1" height="336" fill="#252725"/>
<rect x="470.28" y="0" width="1" height="336" fill="#252725"/>
<rect x="473.57" y="0" width="1.6" height="336" fill="#313331"/>
<rect x="477.47" y="0" width="1" height="336" fill="#252725"/>
<rect x="481.06" y="0" width="1" height="336" fill="#252725"/>
<rect x="484.66" y="0" width="1" height="336" fill="#252725"/>
<rect x="487.95" y="0" width="1.6" height="336" fill="#313331"/>
<rect x="491.84" y="0" width="1" height="336" fill="#252725"/>
<rect x="495.44" y="0" width="1" height="336" fill="#252725"/>
<rect x="499.03" y="0" width="1" height="336" fill="#252725"/>
<rect x="0" y="-0.20" width="498" height="1" fill="#1b1d1b" opacity="0.4"/>
<rect x="0" y="46.98" width="498" height="1" fill="#1b1d1b" opacity="0.4"/>
<rect x="0" y="94.16" width="498" height="1" fill="#1b1d1b" opacity="0.4"/>
<rect x="0" y="141.34" width="498" height="1" fill="#1b1d1b" opacity="0.4"/>
<rect x="0" y="188.52" width="498" height="1" fill="#1b1d1b" opacity="0.4"/>
<rect x="0" y="235.70" width="498" height="1" fill="#1b1d1b" opacity="0.4"/>
<rect x="0" y="282.88" width="498" height="1" fill="#1b1d1b" opacity="0.4"/>
<rect x="0" y="330.06" width="498" height="1" fill="#1b1d1b" opacity="0.4"/>
</svg>
<div class="a" style="left:146.50px;top:65.10px;width:114.00px;height:45.58px;background:#dc2e16;border-radius:1.5px"></div>
<div class="a" style="left:148.75px;top:67.17px;font-size:5.7px;line-height:1;font-weight:bold;color:#fff4f0;white-space:nowrap;transform:scaleX(0.92);transform-origin:0 0;">80s Bitrate Synth</div>
<div class="a" style="left:173.95px;top:73px;width:0.9px;height:37.5px;background:#bc2612"></div>
<div class="a" style="left:176.75px;top:73px;width:0.9px;height:37.5px;background:#bc2612"></div>
<div class="a" style="left:203.70px;top:73px;width:0.9px;height:37.5px;background:#bc2612"></div>
<div class="a" style="left:206.50px;top:73px;width:0.9px;height:37.5px;background:#bc2612"></div>
<div class="a" style="left:232.45px;top:73px;width:0.9px;height:37.5px;background:#bc2612"></div>
<div class="a" style="left:235.25px;top:73px;width:0.9px;height:37.5px;background:#bc2612"></div>
<div class="a" style="left:147.25px;top:81.2px;width:22px;height:1.6px;background:#f4a48c"></div>
<div class="a" style="left:147.25px;top:85.2px;width:22.5px;height:1.6px;background:#f4a48c"></div>
<div class="a" style="left:147.25px;top:89.7px;width:22px;height:1.6px;background:#f4a48c"></div>
<div class="a" style="left:147.25px;top:91.8px;width:24.4px;height:1.6px;background:#f4a48c"></div>
<div class="a" style="left:147.25px;top:96.4px;width:24.4px;height:1.6px;background:#f4a48c"></div>
<div class="a" style="left:147.25px;top:103.10000000000001px;width:24.8px;height:1.6px;background:#f4a48c"></div>
<div class="a" style="left:175.00px;top:83.7px;width:21px;height:1.6px;background:#f8cdb5"></div>
<div class="a" style="left:175.00px;top:85.95px;width:21px;height:1.6px;background:#f8cdb5"></div>
<div class="a" style="left:175.00px;top:89.7px;width:22.5px;height:1.6px;background:#f4a48c"></div>
<div class="a" style="left:175.00px;top:94.7px;width:22.5px;height:1.6px;background:#f4a48c"></div>
<div class="a" style="left:175.00px;top:101.2px;width:24px;height:1.6px;background:#f4a48c"></div>
<div class="a" style="left:203.50px;top:80.95px;width:4.25px;height:1.6px;background:#f4a48c"></div>
<div class="a" style="left:214.50px;top:78.3px;width:10.6px;height:1.6px;background:#f4a48c"></div>
<div class="a" style="left:203.50px;top:85.2px;width:21.5px;height:1.6px;background:#f4a48c"></div>
<div class="a" style="left:207.00px;top:83.7px;width:4px;height:1.6px;background:#f4a48c"></div>
<div class="a" style="left:203.50px;top:89.7px;width:4px;height:1.6px;background:#f4a48c"></div>
<div class="a" style="left:203.50px;top:91.8px;width:21.5px;height:1.6px;background:#f4a48c"></div>
<div class="a" style="left:203.50px;top:96.45px;width:21.5px;height:1.6px;background:#f4a48c"></div>
<div class="a" style="left:203.50px;top:103.10000000000001px;width:21.5px;height:1.6px;background:#f4a48c"></div>
<div class="a" style="left:232.25px;top:83.7px;width:19px;height:1.6px;background:#f8cdb5"></div>
<div class="a" style="left:232.25px;top:85.95px;width:19px;height:1.6px;background:#f8cdb5"></div>
<div class="a" style="left:232.25px;top:89.7px;width:20.5px;height:1.6px;background:#f4a48c"></div>
<div class="a" style="left:232.25px;top:94.7px;width:20.5px;height:1.6px;background:#f4a48c"></div>
<div class="a" style="left:232.25px;top:101.2px;width:22px;height:1.6px;background:#f4a48c"></div>
<div class="a" style="left:261.50px;top:65.10px;width:114.00px;height:45.58px;background:#dc2e16;border-radius:1.5px"></div>
<div class="a" style="left:263.75px;top:67.17px;font-size:5.7px;line-height:1;font-weight:bold;color:#fff4f0;white-space:nowrap;transform:scaleX(0.92);transform-origin:0 0;">80s Bitrate Synth</div>
<div class="a" style="left:288.95px;top:73px;width:0.9px;height:37.5px;background:#bc2612"></div>
<div class="a" style="left:291.75px;top:73px;width:0.9px;height:37.5px;background:#bc2612"></div>
<div class="a" style="left:318.70px;top:73px;width:0.9px;height:37.5px;background:#bc2612"></div>
<div class="a" style="left:321.50px;top:73px;width:0.9px;height:37.5px;background:#bc2612"></div>
<div class="a" style="left:347.45px;top:73px;width:0.9px;height:37.5px;background:#bc2612"></div>
<div class="a" style="left:350.25px;top:73px;width:0.9px;height:37.5px;background:#bc2612"></div>
<div class="a" style="left:262.25px;top:81.2px;width:22px;height:1.6px;background:#f4a48c"></div>
<div class="a" style="left:262.25px;top:85.2px;width:22.5px;height:1.6px;background:#f4a48c"></div>
<div class="a" style="left:262.25px;top:89.7px;width:22px;height:1.6px;background:#f4a48c"></div>
<div class="a" style="left:262.25px;top:91.8px;width:24.4px;height:1.6px;background:#f4a48c"></div>
<div class="a" style="left:262.25px;top:96.4px;width:24.4px;height:1.6px;background:#f4a48c"></div>
<div class="a" style="left:262.25px;top:103.10000000000001px;width:24.8px;height:1.6px;background:#f4a48c"></div>
<div class="a" style="left:290.00px;top:83.7px;width:21px;height:1.6px;background:#f8cdb5"></div>
<div class="a" style="left:290.00px;top:85.95px;width:21px;height:1.6px;background:#f8cdb5"></div>
<div class="a" style="left:290.00px;top:89.7px;width:22.5px;height:1.6px;background:#f4a48c"></div>
<div class="a" style="left:290.00px;top:94.7px;width:22.5px;height:1.6px;background:#f4a48c"></div>
<div class="a" style="left:290.00px;top:101.2px;width:24px;height:1.6px;background:#f4a48c"></div>
<div class="a" style="left:318.50px;top:80.95px;width:4.25px;height:1.6px;background:#f4a48c"></div>
<div class="a" style="left:329.50px;top:78.3px;width:10.6px;height:1.6px;background:#f4a48c"></div>
<div class="a" style="left:318.50px;top:85.2px;width:21.5px;height:1.6px;background:#f4a48c"></div>
<div class="a" style="left:322.00px;top:83.7px;width:4px;height:1.6px;background:#f4a48c"></div>
<div class="a" style="left:318.50px;top:89.7px;width:4px;height:1.6px;background:#f4a48c"></div>
<div class="a" style="left:318.50px;top:91.8px;width:21.5px;height:1.6px;background:#f4a48c"></div>
<div class="a" style="left:318.50px;top:96.45px;width:21.5px;height:1.6px;background:#f4a48c"></div>
<div class="a" style="left:318.50px;top:103.10000000000001px;width:21.5px;height:1.6px;background:#f4a48c"></div>
<div class="a" style="left:347.25px;top:83.7px;width:19px;height:1.6px;background:#f8cdb5"></div>
<div class="a" style="left:347.25px;top:85.95px;width:19px;height:1.6px;background:#f8cdb5"></div>
<div class="a" style="left:347.25px;top:89.7px;width:20.5px;height:1.6px;background:#f4a48c"></div>
<div class="a" style="left:347.25px;top:94.7px;width:20.5px;height:1.6px;background:#f4a48c"></div>
<div class="a" style="left:347.25px;top:101.2px;width:22px;height:1.6px;background:#f4a48c"></div>
<div class="a" style="left:146.50px;top:112.28px;width:113.75px;height:45.58px;background:#dc2e16;border-radius:1.5px"></div>
<div class="a" style="left:148.80px;top:114.47px;font-size:5.7px;line-height:1;font-weight:bold;color:#fff4f0;white-space:nowrap;transform:scaleX(0.86);transform-origin:0 0;">Aurora Waves</div>
<div class="a" style="left:147px;top:130.6px;width:112.5px;height:1.6px;background:#f4a48c"></div>
<div class="a" style="left:147px;top:143.29999999999998px;width:112.5px;height:1.6px;background:#f4a48c"></div>
<div class="a" style="left:147px;top:152.7px;width:112.5px;height:1.6px;background:#f4a48c"></div>
<div class="a" style="left:261.60px;top:206.64px;width:114.00px;height:45.58px;background:#d5df26;border-radius:1.5px"></div>
<div class="a" style="left:264.20px;top:208.51px;font-size:5.3px;line-height:1;font-weight:bold;color:#eef27e;white-space:nowrap;transform:scaleX(0.9);transform-origin:0 0;">Clean Echoes#02</div>
<svg class="a" style="left:0;top:0" width="644" height="400"><path d="M262.00,230.23 L262.50,229.41 L263.00,227.90 L263.50,228.25 L264.00,228.58 L264.50,228.87 L265.00,229.15 L265.50,229.40 L266.00,229.63 L266.50,229.84 L267.00,230.04 L267.50,230.22 L268.00,230.39 L268.50,230.54 L269.00,230.68 L269.50,230.81 L270.00,230.93 L270.50,231.04 L271.00,231.14 L271.50,231.23 L272.00,231.32 L272.50,231.40 L273.00,231.47 L273.50,231.54 L274.00,231.60 L274.50,231.65 L275.00,231.70 L275.50,231.75 L276.00,231.80 L276.50,231.84 L277.00,231.87 L277.50,231.91 L278.00,231.94 L278.50,231.97 L279.00,231.99 L279.50,232.02 L280.00,232.04 L280.50,232.06 L281.00,232.08 L281.50,232.10 L282.00,232.11 L282.50,232.13 L283.00,232.14 L283.50,232.16 L284.00,232.17 L284.50,232.18 L285.00,232.19 L285.50,232.20 L286.00,232.20 L286.50,232.21 L287.00,232.22 L287.50,232.23 L288.00,232.23 L288.50,232.04 L289.00,231.57 L289.50,230.96 L290.00,230.23 L290.50,229.41 L291.00,227.90 L291.50,228.25 L292.00,228.58 L292.50,228.87 L293.00,229.15 L293.50,229.40 L294.00,229.63 L294.50,229.84 L295.00,230.04 L295.50,230.22 L296.00,230.39 L296.50,230.54 L297.00,230.68 L297.50,230.81 L298.00,230.93 L298.50,231.04 L299.00,231.14 L299.50,231.23 L300.00,231.32 L300.50,231.40 L301.00,231.47 L301.50,231.54 L302.00,231.60 L302.50,231.65 L303.00,231.70 L303.50,231.75 L304.00,231.80 L304.50,231.84 L305.00,231.87 L305.50,231.91 L306.00,231.94 L306.50,231.97 L307.00,231.99 L307.50,232.02 L308.00,232.04 L308.50,232.06 L309.00,232.08 L309.50,232.10 L310.00,232.11 L310.50,232.13 L311.00,232.14 L311.50,232.16 L312.00,232.17 L312.50,232.18 L313.00,232.19 L313.50,232.20 L314.00,232.20 L314.50,232.21 L315.00,232.22 L315.50,232.23 L316.00,232.23 L316.50,232.24 L317.00,232.24 L317.50,232.25 L318.00,232.25 L318.50,232.26 L319.00,231.96 L319.50,231.46 L320.00,230.82 L320.50,230.07 L321.00,229.23 L321.50,227.97 L322.00,228.32 L322.50,228.64 L323.00,228.93 L323.50,229.20 L324.00,229.45 L324.50,229.68 L325.00,229.89 L325.50,230.08 L326.00,230.26 L326.50,230.42 L327.00,230.57 L327.50,230.71 L328.00,230.84 L328.50,230.95 L329.00,231.06 L329.50,231.16 L330.00,231.25 L330.50,231.33 L331.00,231.41 L331.50,231.48 L332.00,231.55 L332.50,231.61 L333.00,231.66 L333.50,231.71 L334.00,231.76 L334.50,231.80 L335.00,231.84 L335.50,231.88 L336.00,231.91 L336.50,231.94 L337.00,231.97 L337.50,232.00 L338.00,232.02 L338.50,232.05 L339.00,232.07 L339.50,232.08 L340.00,232.10 L340.50,232.12 L341.00,232.13 L341.50,232.15 L342.00,232.16 L342.50,232.17 L343.00,232.18 L343.50,232.19 L344.00,232.20 L344.50,232.21 L345.00,232.21 L345.50,231.87 L346.00,231.34 L346.50,230.68 L347.00,229.91 L347.50,229.06 L348.00,228.04 L348.50,228.38 L349.00,228.70 L349.50,228.99 L350.00,229.25 L350.50,229.49 L351.00,229.72 L351.50,229.93 L352.00,230.12 L352.50,230.29 L353.00,230.45 L353.50,230.60 L354.00,230.73 L354.50,230.86 L355.00,230.97 L355.50,231.08 L356.00,231.18 L356.50,231.27 L357.00,231.35 L357.50,231.43 L358.00,231.50 L358.50,231.56 L359.00,231.62 L359.50,231.67 L360.00,231.72 L360.50,231.77 L361.00,231.81 L361.50,231.85 L362.00,231.89 L362.50,231.92 L363.00,231.95 L363.50,231.98 L364.00,232.00 L364.50,232.03 L365.00,232.05 L365.50,232.07 L366.00,232.09 L366.50,232.11 L367.00,232.12 L367.50,232.13 L368.00,232.15 L368.50,232.16 L369.00,232.17 L369.50,232.18 L370.00,232.19 L370.50,232.20 L371.00,232.21 L371.50,232.22 L372.00,232.22 L372.50,232.23 L373.00,232.23 L373.50,232.24 L374.00,232.24 L374.50,232.25 L375.00,232.25 L375.00,233.55 L374.50,233.55 L374.00,233.56 L373.50,233.56 L373.00,233.57 L372.50,233.57 L372.00,233.58 L371.50,233.58 L371.00,233.59 L370.50,233.60 L370.00,233.61 L369.50,233.62 L369.00,233.63 L368.50,233.64 L368.00,233.65 L367.50,233.67 L367.00,233.68 L366.50,233.69 L366.00,233.71 L365.50,233.73 L365.00,233.75 L364.50,233.77 L364.00,233.80 L363.50,233.82 L363.00,233.85 L362.50,233.88 L362.00,233.91 L361.50,233.95 L361.00,233.99 L360.50,234.03 L360.00,234.08 L359.50,234.13 L359.00,234.18 L358.50,234.24 L358.00,234.30 L357.50,234.37 L357.00,234.45 L356.50,234.53 L356.00,234.62 L355.50,234.72 L355.00,234.83 L354.50,234.94 L354.00,235.07 L353.50,235.20 L353.00,235.35 L352.50,235.51 L352.00,235.68 L351.50,235.87 L351.00,236.08 L350.50,236.31 L350.00,236.55 L349.50,236.81 L349.00,237.10 L348.50,237.42 L348.00,237.76 L347.50,236.74 L347.00,235.89 L346.50,235.12 L346.00,234.46 L345.50,233.93 L345.00,233.59 L344.50,233.59 L344.00,233.60 L343.50,233.61 L343.00,233.62 L342.50,233.63 L342.00,233.64 L341.50,233.65 L341.00,233.67 L340.50,233.68 L340.00,233.70 L339.50,233.72 L339.00,233.73 L338.50,233.75 L338.00,233.78 L337.50,233.80 L337.00,233.83 L336.50,233.86 L336.00,233.89 L335.50,233.92 L335.00,233.96 L334.50,234.00 L334.00,234.04 L333.50,234.09 L333.00,234.14 L332.50,234.19 L332.00,234.25 L331.50,234.32 L331.00,234.39 L330.50,234.47 L330.00,234.55 L329.50,234.64 L329.00,234.74 L328.50,234.85 L328.00,234.96 L327.50,235.09 L327.00,235.23 L326.50,235.38 L326.00,235.54 L325.50,235.72 L325.00,235.91 L324.50,236.12 L324.00,236.35 L323.50,236.60 L323.00,236.87 L322.50,237.16 L322.00,237.48 L321.50,237.83 L321.00,236.57 L320.50,235.73 L320.00,234.98 L319.50,234.34 L319.00,233.84 L318.50,233.54 L318.00,233.55 L317.50,233.55 L317.00,233.56 L316.50,233.56 L316.00,233.57 L315.50,233.57 L315.00,233.58 L314.50,233.59 L314.00,233.60 L313.50,233.60 L313.00,233.61 L312.50,233.62 L312.00,233.63 L311.50,233.64 L311.00,233.66 L310.50,233.67 L310.00,233.69 L309.50,233.70 L309.00,233.72 L308.50,233.74 L308.00,233.76 L307.50,233.78 L307.00,233.81 L306.50,233.83 L306.00,233.86 L305.50,233.89 L305.00,233.93 L304.50,233.96 L304.00,234.00 L303.50,234.05 L303.00,234.10 L302.50,234.15 L302.00,234.20 L301.50,234.26 L301.00,234.33 L300.50,234.40 L300.00,234.48 L299.50,234.57 L299.00,234.66 L298.50,234.76 L298.00,234.87 L297.50,234.99 L297.00,235.12 L296.50,235.26 L296.00,235.41 L295.50,235.58 L295.00,235.76 L294.50,235.96 L294.00,236.17 L293.50,236.40 L293.00,236.65 L292.50,236.93 L292.00,237.22 L291.50,237.55 L291.00,237.90 L290.50,236.39 L290.00,235.57 L289.50,234.84 L289.00,234.23 L288.50,233.76 L288.00,233.57 L287.50,233.57 L287.00,233.58 L286.50,233.59 L286.00,233.60 L285.50,233.60 L285.00,233.61 L284.50,233.62 L284.00,233.63 L283.50,233.64 L283.00,233.66 L282.50,233.67 L282.00,233.69 L281.50,233.70 L281.00,233.72 L280.50,233.74 L280.00,233.76 L279.50,233.78 L279.00,233.81 L278.50,233.83 L278.00,233.86 L277.50,233.89 L277.00,233.93 L276.50,233.96 L276.00,234.00 L275.50,234.05 L275.00,234.10 L274.50,234.15 L274.00,234.20 L273.50,234.26 L273.00,234.33 L272.50,234.40 L272.00,234.48 L271.50,234.57 L271.00,234.66 L270.50,234.76 L270.00,234.87 L269.50,234.99 L269.00,235.12 L268.50,235.26 L268.00,235.41 L267.50,235.58 L267.00,235.76 L266.50,235.96 L266.00,236.17 L265.50,236.40 L265.00,236.65 L264.50,236.93 L264.00,237.22 L263.50,237.55 L263.00,237.90 L262.50,236.39 L262.00,235.57Z" fill="#f8f8c4"/></svg>
<div class="a" style="left:261.60px;top:253.82px;width:114.00px;height:45.58px;background:#d5df26;border-radius:1.5px"></div>
<div class="a" style="left:264.20px;top:255.71px;font-size:5.3px;line-height:1;font-weight:bold;color:#eef27e;white-space:nowrap;transform:scaleX(0.9);transform-origin:0 0;">Echo Studio#01</div>
<svg class="a" style="left:0;top:0" width="644" height="400"><path d="M262.00,278.70 L262.30,278.20 L262.60,277.73 L262.90,277.29 L263.20,277.14 L263.50,277.58 L263.80,278.04 L264.10,278.53 L264.40,279.05 L264.70,279.65 L265.00,279.65 L265.30,279.65 L265.60,279.65 L265.90,279.65 L266.20,279.65 L266.50,279.59 L266.80,279.25 L267.10,278.94 L267.40,278.65 L267.70,278.37 L268.00,278.30 L268.30,278.57 L268.60,278.86 L268.90,279.17 L269.20,279.49 L269.50,279.65 L269.80,279.65 L270.10,279.65 L270.40,279.65 L270.70,279.65 L271.00,279.65 L271.30,279.39 L271.60,278.95 L271.90,278.55 L272.20,278.17 L272.50,277.81 L272.80,277.74 L273.10,278.10 L273.40,278.47 L273.70,278.87 L274.00,279.30 L274.30,279.65 L274.60,279.65 L274.90,279.65 L275.20,279.65 L275.50,279.65 L275.80,279.65 L276.10,279.65 L276.40,279.42 L276.70,279.18 L277.00,278.94 L277.30,278.72 L277.60,278.69 L277.90,278.91 L278.20,279.14 L278.50,279.39 L278.80,279.65 L279.10,279.65 L279.40,279.65 L279.70,279.65 L280.00,279.65 L280.30,279.65 L280.60,279.65 L280.90,279.23 L281.20,278.73 L281.50,278.27 L281.80,277.83 L282.10,277.42 L282.40,277.39 L282.70,277.80 L283.00,278.24 L283.30,278.69 L283.60,279.19 L283.90,279.65 L284.20,279.65 L284.50,279.65 L284.80,279.65 L285.10,279.65 L285.40,279.65 L285.70,279.47 L286.00,279.11 L286.30,278.77 L286.60,278.45 L286.90,278.15 L287.20,278.15 L287.50,278.45 L287.80,278.77 L288.10,279.11 L288.40,279.47 L288.70,279.65 L289.00,279.65 L289.30,279.65 L289.60,279.65 L289.90,279.65 L290.20,279.65 L290.50,279.26 L290.80,278.80 L291.10,278.37 L291.40,277.96 L291.70,277.58 L292.00,277.60 L292.30,277.99 L292.60,278.39 L292.90,278.82 L293.20,279.29 L293.50,279.65 L293.80,279.65 L294.10,279.65 L294.40,279.65 L294.70,279.65 L295.00,279.65 L295.30,279.59 L295.60,279.29 L295.90,279.01 L296.20,278.75 L296.50,278.50 L296.80,278.54 L297.10,278.79 L297.40,279.05 L297.70,279.33 L298.00,279.63 L298.30,279.65 L298.60,279.65 L298.90,279.65 L299.20,279.65 L299.50,279.65 L299.80,279.65 L300.10,279.02 L300.40,278.46 L300.70,277.94 L301.00,277.45 L301.30,276.98 L301.60,277.07 L301.90,277.55 L302.20,278.04 L302.50,278.57 L302.80,279.14 L303.10,279.65 L303.40,279.65 L303.70,279.65 L304.00,279.65 L304.30,279.65 L304.60,279.65 L304.90,279.35 L305.20,278.96 L305.50,278.59 L305.80,278.25 L306.10,277.92 L306.40,278.00 L306.70,278.34 L307.00,278.69 L307.30,279.06 L307.60,279.47 L307.90,279.65 L308.20,279.65 L308.50,279.65 L308.80,279.65 L309.10,279.65 L309.40,279.65 L309.70,279.48 L310.00,279.15 L310.30,278.85 L310.60,278.56 L310.90,278.29 L311.20,278.38 L311.50,278.66 L311.80,278.95 L312.10,279.26 L312.40,279.60 L312.70,279.65 L313.00,279.65 L313.30,279.65 L313.60,279.65 L313.90,279.65 L314.20,279.65 L314.50,279.14 L314.80,278.67 L315.10,278.23 L315.40,277.81 L315.70,277.42 L316.00,277.57 L316.30,277.98 L316.60,278.40 L316.90,278.85 L317.20,279.35 L317.50,279.65 L317.80,279.65 L318.10,279.65 L318.40,279.65 L318.70,279.65 L319.00,279.60 L319.30,279.01 L319.60,278.49 L319.90,278.01 L320.20,277.55 L320.50,277.11 L320.80,277.32 L321.10,277.76 L321.40,278.23 L321.70,278.73 L322.00,279.28 L322.30,279.65 L322.60,279.65 L322.90,279.65 L323.20,279.65 L323.50,279.65 L323.80,279.65 L324.10,279.45 L324.40,279.12 L324.70,278.82 L325.00,278.54 L325.30,278.26 L325.60,278.41 L325.90,278.69 L326.20,278.98 L326.50,279.29 L326.80,279.64 L327.10,279.65 L327.40,279.65 L327.70,279.65 L328.00,279.65 L328.30,279.65 L328.60,279.65 L328.90,279.21 L329.20,278.79 L329.50,278.40 L329.80,278.03 L330.10,277.67 L330.40,277.88 L330.70,278.25 L331.00,278.63 L331.30,279.03 L331.60,279.48 L331.90,279.65 L332.20,279.65 L332.50,279.65 L332.80,279.65 L333.10,279.65 L333.40,279.65 L333.70,279.58 L334.00,279.32 L334.30,279.08 L334.60,278.85 L334.90,278.64 L335.20,278.78 L335.50,279.00 L335.80,279.24 L336.10,279.49 L336.40,279.65 L336.70,279.65 L337.00,279.65 L337.30,279.65 L337.60,279.65 L337.90,279.65 L338.20,279.56 L338.50,279.02 L338.80,278.54 L339.10,278.09 L339.40,277.66 L339.70,277.25 L340.00,277.55 L340.30,277.97 L340.60,278.42 L340.90,278.89 L341.20,279.41 L341.50,279.65 L341.80,279.65 L342.10,279.65 L342.40,279.65 L342.70,279.65 L343.00,279.65 L343.30,279.32 L343.60,278.97 L343.90,278.64 L344.20,278.33 L344.50,278.03 L344.80,278.27 L345.10,278.58 L345.40,278.90 L345.70,279.25 L346.00,279.63 L346.30,279.65 L346.60,279.65 L346.90,279.65 L347.20,279.65 L347.50,279.65 L347.80,279.57 L348.10,279.07 L348.40,278.62 L348.70,278.20 L349.00,277.81 L349.30,277.42 L349.60,277.75 L349.90,278.15 L350.20,278.56 L350.50,279.01 L350.80,279.50 L351.10,279.65 L351.40,279.65 L351.70,279.65 L352.00,279.65 L352.30,279.65 L352.60,279.65 L352.90,279.46 L353.20,279.18 L353.50,278.91 L353.80,278.65 L354.10,278.41 L354.40,278.64 L354.70,278.89 L355.00,279.16 L355.30,279.44 L355.60,279.65 L355.90,279.65 L356.20,279.65 L356.50,279.65 L356.80,279.65 L357.10,279.65 L357.40,279.39 L357.70,278.79 L358.00,278.25 L358.30,277.74 L358.60,277.26 L358.90,276.80 L359.20,277.26 L359.50,277.74 L359.80,278.25 L360.10,278.79 L360.40,279.39 L360.70,279.65 L361.00,279.65 L361.30,279.65 L361.60,279.65 L361.90,279.65 L362.20,279.61 L362.50,279.19 L362.80,278.81 L363.10,278.45 L363.40,278.11 L363.70,277.81 L364.00,278.14 L364.30,278.48 L364.60,278.83 L364.90,279.22 L365.20,279.64 L365.50,279.65 L365.80,279.65 L366.10,279.65 L366.40,279.65 L366.70,279.65 L367.00,279.65 L367.30,279.35 L367.60,279.03 L367.90,278.73 L368.20,278.45 L368.50,278.22 L368.80,278.49 L369.10,278.77 L369.40,279.07 L369.70,279.39 L370.00,279.65 L370.30,279.65 L370.60,279.65 L370.90,279.65 L371.20,279.65 L371.50,279.65 L371.80,279.45 L372.10,278.95 L372.40,278.49 L372.70,278.06 L373.00,277.65 L373.30,277.34 L373.60,277.73 L373.90,278.15 L374.20,278.58 L374.50,279.04 L374.80,279.56 L374.80,280.84 L374.50,281.36 L374.20,281.82 L373.90,282.25 L373.60,282.67 L373.30,283.06 L373.00,282.75 L372.70,282.34 L372.40,281.91 L372.10,281.45 L371.80,280.95 L371.50,280.75 L371.20,280.75 L370.90,280.75 L370.60,280.75 L370.30,280.75 L370.00,280.75 L369.70,281.01 L369.40,281.33 L369.10,281.63 L368.80,281.91 L368.50,282.18 L368.20,281.95 L367.90,281.67 L367.60,281.37 L367.30,281.05 L367.00,280.75 L366.70,280.75 L366.40,280.75 L366.10,280.75 L365.80,280.75 L365.50,280.75 L365.20,280.76 L364.90,281.18 L364.60,281.57 L364.30,281.92 L364.00,282.26 L363.70,282.59 L363.40,282.29 L363.10,281.95 L362.80,281.59 L362.50,281.21 L362.20,280.79 L361.90,280.75 L361.60,280.75 L361.30,280.75 L361.00,280.75 L360.70,280.75 L360.40,281.01 L360.10,281.61 L359.80,282.15 L359.50,282.66 L359.20,283.14 L358.90,283.60 L358.60,283.14 L358.30,282.66 L358.00,282.15 L357.70,281.61 L357.40,281.01 L357.10,280.75 L356.80,280.75 L356.50,280.75 L356.20,280.75 L355.90,280.75 L355.60,280.75 L355.30,280.96 L355.00,281.24 L354.70,281.51 L354.40,281.76 L354.10,281.99 L353.80,281.75 L353.50,281.49 L353.20,281.22 L352.90,280.94 L352.60,280.75 L352.30,280.75 L352.00,280.75 L351.70,280.75 L351.40,280.75 L351.10,280.75 L350.80,280.90 L350.50,281.39 L350.20,281.84 L349.90,282.25 L349.60,282.65 L349.30,282.98 L349.00,282.59 L348.70,282.20 L348.40,281.78 L348.10,281.33 L347.80,280.83 L347.50,280.75 L347.20,280.75 L346.90,280.75 L346.60,280.75 L346.30,280.75 L346.00,280.77 L345.70,281.15 L345.40,281.50 L345.10,281.82 L344.80,282.13 L344.50,282.37 L344.20,282.07 L343.90,281.76 L343.60,281.43 L343.30,281.08 L343.00,280.75 L342.70,280.75 L342.40,280.75 L342.10,280.75 L341.80,280.75 L341.50,280.75 L341.20,280.99 L340.90,281.51 L340.60,281.98 L340.30,282.43 L340.00,282.85 L339.70,283.15 L339.40,282.74 L339.10,282.31 L338.80,281.86 L338.50,281.38 L338.20,280.84 L337.90,280.75 L337.60,280.75 L337.30,280.75 L337.00,280.75 L336.70,280.75 L336.40,280.75 L336.10,280.91 L335.80,281.16 L335.50,281.40 L335.20,281.62 L334.90,281.76 L334.60,281.55 L334.30,281.32 L334.00,281.08 L333.70,280.82 L333.40,280.75 L333.10,280.75 L332.80,280.75 L332.50,280.75 L332.20,280.75 L331.90,280.75 L331.60,280.92 L331.30,281.37 L331.00,281.77 L330.70,282.15 L330.40,282.52 L330.10,282.73 L329.80,282.37 L329.50,282.00 L329.20,281.61 L328.90,281.19 L328.60,280.75 L328.30,280.75 L328.00,280.75 L327.70,280.75 L327.40,280.75 L327.10,280.75 L326.80,280.76 L326.50,281.11 L326.20,281.42 L325.90,281.71 L325.60,281.99 L325.30,282.14 L325.00,281.86 L324.70,281.58 L324.40,281.28 L324.10,280.95 L323.80,280.75 L323.50,280.75 L323.20,280.75 L322.90,280.75 L322.60,280.75 L322.30,280.75 L322.00,281.12 L321.70,281.67 L321.40,282.17 L321.10,282.64 L320.80,283.08 L320.50,283.29 L320.20,282.85 L319.90,282.39 L319.60,281.91 L319.30,281.39 L319.00,280.80 L318.70,280.75 L318.40,280.75 L318.10,280.75 L317.80,280.75 L317.50,280.75 L317.20,281.05 L316.90,281.55 L316.60,282.00 L316.30,282.42 L316.00,282.83 L315.70,282.98 L315.40,282.59 L315.10,282.17 L314.80,281.73 L314.50,281.26 L314.20,280.75 L313.90,280.75 L313.60,280.75 L313.30,280.75 L313.00,280.75 L312.70,280.75 L312.40,280.80 L312.10,281.14 L311.80,281.45 L311.50,281.74 L311.20,282.02 L310.90,282.11 L310.60,281.84 L310.30,281.55 L310.00,281.25 L309.70,280.92 L309.40,280.75 L309.10,280.75 L308.80,280.75 L308.50,280.75 L308.20,280.75 L307.90,280.75 L307.60,280.93 L307.30,281.34 L307.00,281.71 L306.70,282.06 L306.40,282.40 L306.10,282.48 L305.80,282.15 L305.50,281.81 L305.20,281.44 L304.90,281.05 L304.60,280.75 L304.30,280.75 L304.00,280.75 L303.70,280.75 L303.40,280.75 L303.10,280.75 L302.80,281.26 L302.50,281.83 L302.20,282.36 L301.90,282.85 L301.60,283.33 L301.30,283.42 L301.00,282.95 L300.70,282.46 L300.40,281.94 L300.10,281.38 L299.80,280.75 L299.50,280.75 L299.20,280.75 L298.90,280.75 L298.60,280.75 L298.30,280.75 L298.00,280.77 L297.70,281.07 L297.40,281.35 L297.10,281.61 L296.80,281.86 L296.50,281.90 L296.20,281.65 L295.90,281.39 L295.60,281.11 L295.30,280.81 L295.00,280.75 L294.70,280.75 L294.40,280.75 L294.10,280.75 L293.80,280.75 L293.50,280.75 L293.20,281.11 L292.90,281.58 L292.60,282.01 L292.30,282.41 L292.00,282.80 L291.70,282.82 L291.40,282.44 L291.10,282.03 L290.80,281.60 L290.50,281.14 L290.20,280.75 L289.90,280.75 L289.60,280.75 L289.30,280.75 L289.00,280.75 L288.70,280.75 L288.40,280.93 L288.10,281.29 L287.80,281.63 L287.50,281.95 L287.20,282.25 L286.90,282.25 L286.60,281.95 L286.30,281.63 L286.00,281.29 L285.70,280.93 L285.40,280.75 L285.10,280.75 L284.80,280.75 L284.50,280.75 L284.20,280.75 L283.90,280.75 L283.60,281.21 L283.30,281.71 L283.00,282.16 L282.70,282.60 L282.40,283.01 L282.10,282.98 L281.80,282.57 L281.50,282.13 L281.20,281.67 L280.90,281.17 L280.60,280.75 L280.30,280.75 L280.00,280.75 L279.70,280.75 L279.40,280.75 L279.10,280.75 L278.80,280.75 L278.50,281.01 L278.20,281.26 L277.90,281.49 L277.60,281.71 L277.30,281.68 L277.00,281.46 L276.70,281.22 L276.40,280.98 L276.10,280.75 L275.80,280.75 L275.50,280.75 L275.20,280.75 L274.90,280.75 L274.60,280.75 L274.30,280.75 L274.00,281.10 L273.70,281.53 L273.40,281.93 L273.10,282.30 L272.80,282.66 L272.50,282.59 L272.20,282.23 L271.90,281.85 L271.60,281.45 L271.30,281.01 L271.00,280.75 L270.70,280.75 L270.40,280.75 L270.10,280.75 L269.80,280.75 L269.50,280.75 L269.20,280.91 L268.90,281.23 L268.60,281.54 L268.30,281.83 L268.00,282.10 L267.70,282.03 L267.40,281.75 L267.10,281.46 L266.80,281.15 L266.50,280.81 L266.20,280.75 L265.90,280.75 L265.60,280.75 L265.30,280.75 L265.00,280.75 L264.70,280.75 L264.40,281.35 L264.10,281.87 L263.80,282.36 L263.50,282.82 L263.20,283.26 L262.90,283.11 L262.60,282.67 L262.30,282.20 L262.00,281.70Z" fill="#f8f8c4"/><path d="M262.50 280.2 L263.10 275.70 L263.70 280.2 L263.10 284.70Z" fill="#f8f8c4" opacity="0.7"/><path d="M272.08 280.2 L272.68 276.20 L273.28 280.2 L272.68 284.20Z" fill="#f8f8c4" opacity="0.7"/><path d="M281.66 280.2 L282.26 276.00 L282.86 280.2 L282.26 284.40Z" fill="#f8f8c4" opacity="0.7"/><path d="M291.24 280.2 L291.84 276.40 L292.44 280.2 L291.84 284.00Z" fill="#f8f8c4" opacity="0.7"/><path d="M300.82 280.2 L301.42 275.60 L302.02 280.2 L301.42 284.80Z" fill="#f8f8c4" opacity="0.7"/><path d="M305.61 280.2 L306.21 276.20 L306.81 280.2 L306.21 284.20Z" fill="#f8f8c4" opacity="0.7"/><path d="M315.19 280.2 L315.79 276.00 L316.39 280.2 L315.79 284.40Z" fill="#f8f8c4" opacity="0.7"/><path d="M324.77 280.2 L325.37 276.30 L325.97 280.2 L325.37 284.10Z" fill="#f8f8c4" opacity="0.7"/><path d="M334.35 280.2 L334.95 275.80 L335.55 280.2 L334.95 284.60Z" fill="#f8f8c4" opacity="0.7"/><path d="M343.93 280.2 L344.53 276.20 L345.13 280.2 L344.53 284.20Z" fill="#f8f8c4" opacity="0.7"/><path d="M353.51 280.2 L354.11 275.70 L354.71 280.2 L354.11 284.70Z" fill="#f8f8c4" opacity="0.7"/><path d="M363.09 280.2 L363.69 276.40 L364.29 280.2 L363.69 284.00Z" fill="#f8f8c4" opacity="0.7"/><path d="M367.88 280.2 L368.48 276.00 L369.08 280.2 L368.48 284.40Z" fill="#f8f8c4" opacity="0.7"/></svg>
<div class="a" style="left:232.60px;top:301.00px;width:143.00px;height:45.58px;background:#d5df26;border-radius:1.5px"></div>
<div class="a" style="left:235.20px;top:302.51px;font-size:5.3px;line-height:1;font-weight:bold;color:#eef27e;white-space:nowrap;transform:scaleX(0.9);transform-origin:0 0;">Sub Station#01</div>
<svg class="a" style="left:0;top:0" width="644" height="400"><path d="M233.00,327.15 L233.40,327.15 L233.80,327.15 L234.20,327.15 L234.60,327.15 L235.00,327.15 L235.40,327.15 L235.80,327.15 L236.20,327.15 L236.60,327.15 L237.00,327.15 L237.40,327.15 L237.80,327.15 L238.20,327.15 L238.60,327.15 L239.00,327.15 L239.40,327.15 L239.80,327.15 L240.20,327.15 L240.60,327.15 L241.00,327.15 L241.40,327.15 L241.80,327.15 L242.20,327.15 L242.60,327.15 L243.00,327.15 L243.40,327.15 L243.80,327.15 L244.20,327.15 L244.60,327.15 L245.00,327.15 L245.40,327.15 L245.80,327.15 L246.20,327.15 L246.60,327.15 L247.00,327.15 L247.40,327.15 L247.80,326.60 L248.20,326.39 L248.60,324.76 L249.00,324.54 L249.40,324.88 L249.80,322.97 L250.20,324.47 L250.60,323.20 L251.00,324.25 L251.40,323.26 L251.80,324.97 L252.20,325.22 L252.60,325.33 L253.00,326.60 L253.40,326.60 L253.80,326.60 L254.20,326.60 L254.60,325.24 L255.00,323.05 L255.40,324.13 L255.80,325.65 L256.20,325.65 L256.60,325.59 L257.00,325.49 L257.40,325.85 L257.80,325.89 L258.20,324.83 L258.60,324.50 L259.00,325.85 L259.40,324.67 L259.80,325.59 L260.20,326.60 L260.60,326.60 L261.00,326.60 L261.40,326.60 L261.80,326.60 L262.20,326.60 L262.60,326.60 L263.00,326.60 L263.40,326.60 L263.80,325.94 L264.20,325.79 L264.60,324.22 L265.00,324.47 L265.40,323.64 L265.80,323.12 L266.20,325.13 L266.60,323.84 L267.00,323.98 L267.40,323.87 L267.80,324.61 L268.20,323.93 L268.60,325.20 L269.00,325.19 L269.40,325.64 L269.80,324.73 L270.20,325.36 L270.60,326.60 L271.00,326.60 L271.40,326.60 L271.80,326.60 L272.20,326.60 L272.60,326.60 L273.00,326.60 L273.40,326.60 L273.80,326.60 L274.20,326.60 L274.60,325.85 L275.00,324.12 L275.40,323.86 L275.80,325.37 L276.20,325.11 L276.60,323.79 L277.00,324.36 L277.40,323.95 L277.80,324.09 L278.20,325.05 L278.60,324.28 L279.00,324.71 L279.40,325.53 L279.80,325.55 L280.20,326.13 L280.60,325.67 L281.00,324.92 L281.40,326.60 L281.80,326.60 L282.20,326.60 L282.60,326.60 L283.00,326.60 L283.40,326.60 L283.80,326.60 L284.20,326.60 L284.60,326.60 L285.00,326.60 L285.40,326.52 L285.80,325.59 L286.20,323.10 L286.60,324.44 L287.00,323.46 L287.40,323.95 L287.80,322.97 L288.20,323.55 L288.60,323.11 L289.00,323.88 L289.40,324.89 L289.80,324.97 L290.20,325.27 L290.60,323.42 L291.00,325.28 L291.40,325.54 L291.80,323.33 L292.20,325.22 L292.60,323.68 L293.00,325.57 L293.40,324.79 L293.80,325.37 L294.20,324.15 L294.60,324.67 L295.00,324.69 L295.40,324.53 L295.80,324.41 L296.20,325.46 L296.60,326.60 L297.00,326.60 L297.40,326.60 L297.80,326.60 L298.20,326.60 L298.60,326.60 L299.00,326.60 L299.40,326.60 L299.80,326.60 L300.20,326.60 L300.60,326.60 L301.00,326.60 L301.40,326.60 L301.80,326.60 L302.20,326.60 L302.60,326.60 L303.00,326.60 L303.40,326.60 L303.80,326.60 L304.20,326.60 L304.60,325.98 L305.00,324.21 L305.40,324.90 L305.80,324.10 L306.20,324.67 L306.60,324.21 L307.00,324.42 L307.40,322.01 L307.80,322.73 L308.20,322.32 L308.60,322.05 L309.00,323.25 L309.40,322.35 L309.80,323.59 L310.20,323.99 L310.60,322.51 L311.00,322.71 L311.40,322.64 L311.80,324.00 L312.20,323.26 L312.60,324.31 L313.00,322.79 L313.40,323.06 L313.80,324.75 L314.20,323.16 L314.60,325.10 L315.00,325.36 L315.40,323.88 L315.80,324.96 L316.20,324.47 L316.60,324.25 L317.00,325.66 L317.40,324.13 L317.80,325.21 L318.20,324.92 L318.60,325.15 L319.00,324.38 L319.40,324.43 L319.80,325.40 L320.20,326.60 L320.60,326.60 L321.00,326.60 L321.40,326.60 L321.80,326.60 L322.20,326.60 L322.60,326.60 L323.00,325.76 L323.40,324.60 L323.80,323.72 L324.20,324.61 L324.60,325.19 L325.00,324.88 L325.40,324.58 L325.80,324.51 L326.20,324.54 L326.60,325.01 L327.00,324.02 L327.40,325.29 L327.80,324.99 L328.20,324.21 L328.60,324.46 L329.00,325.50 L329.40,325.66 L329.80,324.71 L330.20,326.17 L330.60,326.01 L331.00,325.42 L331.40,325.48 L331.80,326.11 L332.20,326.60 L332.60,326.60 L333.00,326.60 L333.40,326.60 L333.80,326.60 L334.20,326.60 L334.60,326.60 L335.00,326.60 L335.40,326.60 L335.80,326.60 L336.20,325.95 L336.60,325.34 L337.00,325.38 L337.40,323.82 L337.80,325.12 L338.20,324.59 L338.60,324.81 L339.00,323.45 L339.40,324.50 L339.80,324.95 L340.20,325.52 L340.60,324.66 L341.00,324.27 L341.40,324.23 L341.80,323.79 L342.20,324.10 L342.60,325.36 L343.00,325.65 L343.40,324.45 L343.80,324.47 L344.20,325.09 L344.60,324.56 L345.00,325.14 L345.40,325.69 L345.80,325.93 L346.20,326.60 L346.60,326.60 L347.00,326.60 L347.40,326.60 L347.80,326.60 L348.20,326.60 L348.60,326.60 L349.00,325.41 L349.40,324.51 L349.80,324.51 L350.20,324.34 L350.60,325.26 L351.00,325.30 L351.40,324.25 L351.80,323.69 L352.20,324.75 L352.60,325.13 L353.00,325.32 L353.40,325.21 L353.80,324.67 L354.20,325.39 L354.60,324.63 L355.00,326.04 L355.40,325.87 L355.80,326.60 L356.20,326.60 L356.60,326.60 L357.00,326.60 L357.40,326.04 L357.80,325.15 L358.20,326.14 L358.60,325.31 L359.00,325.44 L359.40,325.63 L359.80,326.02 L360.20,325.51 L360.60,325.35 L361.00,326.47 L361.40,325.87 L361.80,326.30 L362.20,326.60 L362.60,326.60 L363.00,326.60 L363.40,326.60 L363.80,326.60 L364.20,326.17 L364.60,326.14 L365.00,325.11 L365.40,323.21 L365.80,324.16 L366.20,324.35 L366.60,322.41 L367.00,322.52 L367.40,324.38 L367.80,324.23 L368.20,324.59 L368.60,325.05 L369.00,324.79 L369.40,322.96 L369.80,325.33 L370.20,325.00 L370.60,325.12 L371.00,325.46 L371.40,324.47 L371.80,324.04 L372.20,323.91 L372.60,324.44 L373.00,324.12 L373.40,325.89 L373.80,325.37 L374.20,324.08 L374.60,325.89 L375.00,325.56 L375.00,329.64 L374.60,329.31 L374.20,331.12 L373.80,329.83 L373.40,329.31 L373.00,331.08 L372.60,330.76 L372.20,331.29 L371.80,331.16 L371.40,330.73 L371.00,329.74 L370.60,330.08 L370.20,330.20 L369.80,329.87 L369.40,332.24 L369.00,330.41 L368.60,330.15 L368.20,330.61 L367.80,330.97 L367.40,330.82 L367.00,332.68 L366.60,332.79 L366.20,330.85 L365.80,331.04 L365.40,331.99 L365.00,330.09 L364.60,329.06 L364.20,329.03 L363.80,328.60 L363.40,328.60 L363.00,328.60 L362.60,328.60 L362.20,328.60 L361.80,328.90 L361.40,329.33 L361.00,328.73 L360.60,329.85 L360.20,329.69 L359.80,329.18 L359.40,329.57 L359.00,329.76 L358.60,329.89 L358.20,329.06 L357.80,330.05 L357.40,329.16 L357.00,328.60 L356.60,328.60 L356.20,328.60 L355.80,328.60 L355.40,329.33 L355.00,329.16 L354.60,330.57 L354.20,329.81 L353.80,330.53 L353.40,329.99 L353.00,329.88 L352.60,330.07 L352.20,330.45 L351.80,331.51 L351.40,330.95 L351.00,329.90 L350.60,329.94 L350.20,330.86 L349.80,330.69 L349.40,330.69 L349.00,329.79 L348.60,328.60 L348.20,328.60 L347.80,328.60 L347.40,328.60 L347.00,328.60 L346.60,328.60 L346.20,328.60 L345.80,329.27 L345.40,329.51 L345.00,330.06 L344.60,330.64 L344.20,330.11 L343.80,330.73 L343.40,330.75 L343.00,329.55 L342.60,329.84 L342.20,331.10 L341.80,331.41 L341.40,330.97 L341.00,330.93 L340.60,330.54 L340.20,329.68 L339.80,330.25 L339.40,330.70 L339.00,331.75 L338.60,330.39 L338.20,330.61 L337.80,330.08 L337.40,331.38 L337.00,329.82 L336.60,329.86 L336.20,329.25 L335.80,328.60 L335.40,328.60 L335.00,328.60 L334.60,328.60 L334.20,328.60 L333.80,328.60 L333.40,328.60 L333.00,328.60 L332.60,328.60 L332.20,328.60 L331.80,329.09 L331.40,329.72 L331.00,329.78 L330.60,329.19 L330.20,329.03 L329.80,330.49 L329.40,329.54 L329.00,329.70 L328.60,330.74 L328.20,330.99 L327.80,330.21 L327.40,329.91 L327.00,331.18 L326.60,330.19 L326.20,330.66 L325.80,330.69 L325.40,330.62 L325.00,330.32 L324.60,330.01 L324.20,330.59 L323.80,331.48 L323.40,330.60 L323.00,329.44 L322.60,328.60 L322.20,328.60 L321.80,328.60 L321.40,328.60 L321.00,328.60 L320.60,328.60 L320.20,328.60 L319.80,329.80 L319.40,330.77 L319.00,330.82 L318.60,330.05 L318.20,330.28 L317.80,329.99 L317.40,331.07 L317.00,329.54 L316.60,330.95 L316.20,330.73 L315.80,330.24 L315.40,331.32 L315.00,329.84 L314.60,330.10 L314.20,332.04 L313.80,330.45 L313.40,332.14 L313.00,332.41 L312.60,330.89 L312.20,331.94 L311.80,331.20 L311.40,332.56 L311.00,332.49 L310.60,332.69 L310.20,331.21 L309.80,331.61 L309.40,332.85 L309.00,331.95 L308.60,333.15 L308.20,332.88 L307.80,332.47 L307.40,333.19 L307.00,330.78 L306.60,330.99 L306.20,330.53 L305.80,331.10 L305.40,330.30 L305.00,330.99 L304.60,329.22 L304.20,328.60 L303.80,328.60 L303.40,328.60 L303.00,328.60 L302.60,328.60 L302.20,328.60 L301.80,328.60 L301.40,328.60 L301.00,328.60 L300.60,328.60 L300.20,328.60 L299.80,328.60 L299.40,328.60 L299.00,328.60 L298.60,328.60 L298.20,328.60 L297.80,328.60 L297.40,328.60 L297.00,328.60 L296.60,328.60 L296.20,329.74 L295.80,330.79 L295.40,330.67 L295.00,330.51 L294.60,330.53 L294.20,331.05 L293.80,329.83 L293.40,330.41 L293.00,329.63 L292.60,331.52 L292.20,329.98 L291.80,331.87 L291.40,329.66 L291.00,329.92 L290.60,331.78 L290.20,329.93 L289.80,330.23 L289.40,330.31 L289.00,331.32 L288.60,332.09 L288.20,331.65 L287.80,332.23 L287.40,331.25 L287.00,331.74 L286.60,330.76 L286.20,332.10 L285.80,329.61 L285.40,328.68 L285.00,328.60 L284.60,328.60 L284.20,328.60 L283.80,328.60 L283.40,328.60 L283.00,328.60 L282.60,328.60 L282.20,328.60 L281.80,328.60 L281.40,328.60 L281.00,330.28 L280.60,329.53 L280.20,329.07 L279.80,329.65 L279.40,329.67 L279.00,330.49 L278.60,330.92 L278.20,330.15 L277.80,331.11 L277.40,331.25 L277.00,330.84 L276.60,331.41 L276.20,330.09 L275.80,329.83 L275.40,331.34 L275.00,331.08 L274.60,329.35 L274.20,328.60 L273.80,328.60 L273.40,328.60 L273.00,328.60 L272.60,328.60 L272.20,328.60 L271.80,328.60 L271.40,328.60 L271.00,328.60 L270.60,328.60 L270.20,329.84 L269.80,330.47 L269.40,329.56 L269.00,330.01 L268.60,330.00 L268.20,331.27 L267.80,330.59 L267.40,331.33 L267.00,331.22 L266.60,331.36 L266.20,330.07 L265.80,332.08 L265.40,331.56 L265.00,330.73 L264.60,330.98 L264.20,329.41 L263.80,329.26 L263.40,328.60 L263.00,328.60 L262.60,328.60 L262.20,328.60 L261.80,328.60 L261.40,328.60 L261.00,328.60 L260.60,328.60 L260.20,328.60 L259.80,329.61 L259.40,330.53 L259.00,329.35 L258.60,330.70 L258.20,330.37 L257.80,329.31 L257.40,329.35 L257.00,329.71 L256.60,329.61 L256.20,329.55 L255.80,329.55 L255.40,331.07 L255.00,332.15 L254.60,329.96 L254.20,328.60 L253.80,328.60 L253.40,328.60 L253.00,328.60 L252.60,329.87 L252.20,329.98 L251.80,330.23 L251.40,331.94 L251.00,330.95 L250.60,332.00 L250.20,330.73 L249.80,332.23 L249.40,330.32 L249.00,330.66 L248.60,330.44 L248.20,328.81 L247.80,328.60 L247.40,328.05 L247.00,328.05 L246.60,328.05 L246.20,328.05 L245.80,328.05 L245.40,328.05 L245.00,328.05 L244.60,328.05 L244.20,328.05 L243.80,328.05 L243.40,328.05 L243.00,328.05 L242.60,328.05 L242.20,328.05 L241.80,328.05 L241.40,328.05 L241.00,328.05 L240.60,328.05 L240.20,328.05 L239.80,328.05 L239.40,328.05 L239.00,328.05 L238.60,328.05 L238.20,328.05 L237.80,328.05 L237.40,328.05 L237.00,328.05 L236.60,328.05 L236.20,328.05 L235.80,328.05 L235.40,328.05 L235.00,328.05 L234.60,328.05 L234.20,328.05 L233.80,328.05 L233.40,328.05 L233.00,328.05Z" fill="#f8f8c4"/>
<path d="M247.70 327.6 L248.60 317.93 L249.50 327.6 L248.60 337.27Z" fill="#f8f8c4" opacity="0.8"/>
<path d="M249.60 327.6 L250.50 316.27 L251.40 327.6 L250.50 338.93Z" fill="#f8f8c4" opacity="0.8"/>
<path d="M251.10 327.6 L252.00 313.54 L252.90 327.6 L252.00 341.66Z" fill="#f8f8c4" opacity="0.8"/>
<path d="M254.10 327.6 L255.00 318.08 L255.90 327.6 L255.00 337.12Z" fill="#f8f8c4" opacity="0.8"/>
<path d="M256.60 327.6 L257.50 313.61 L258.40 327.6 L257.50 341.59Z" fill="#f8f8c4" opacity="0.8"/>
<path d="M263.10 327.6 L264.00 319.16 L264.90 327.6 L264.00 336.04Z" fill="#f8f8c4" opacity="0.8"/>
<path d="M265.60 327.6 L266.50 314.57 L267.40 327.6 L266.50 340.63Z" fill="#f8f8c4" opacity="0.8"/>
<path d="M268.10 327.6 L269.00 318.51 L269.90 327.6 L269.00 336.69Z" fill="#f8f8c4" opacity="0.8"/>
<path d="M274.10 327.6 L275.00 313.02 L275.90 327.6 L275.00 342.18Z" fill="#f8f8c4" opacity="0.8"/>
<path d="M276.60 327.6 L277.50 315.29 L278.40 327.6 L277.50 339.91Z" fill="#f8f8c4" opacity="0.8"/>
<path d="M279.10 327.6 L280.00 317.84 L280.90 327.6 L280.00 337.36Z" fill="#f8f8c4" opacity="0.8"/>
<path d="M284.10 327.6 L285.00 314.45 L285.90 327.6 L285.00 340.75Z" fill="#f8f8c4" opacity="0.8"/>
<path d="M286.60 327.6 L287.50 313.61 L288.40 327.6 L287.50 341.59Z" fill="#f8f8c4" opacity="0.8"/>
<path d="M289.10 327.6 L290.00 317.65 L290.90 327.6 L290.00 337.55Z" fill="#f8f8c4" opacity="0.8"/>
<path d="M291.60 327.6 L292.50 313.16 L293.40 327.6 L292.50 342.04Z" fill="#f8f8c4" opacity="0.8"/>
<path d="M294.10 327.6 L295.00 315.97 L295.90 327.6 L295.00 339.23Z" fill="#f8f8c4" opacity="0.8"/>
<path d="M303.10 327.6 L304.00 313.30 L304.90 327.6 L304.00 341.90Z" fill="#f8f8c4" opacity="0.8"/>
<path d="M305.60 327.6 L306.50 313.57 L307.40 327.6 L306.50 341.63Z" fill="#f8f8c4" opacity="0.8"/>
<path d="M308.10 327.6 L309.00 315.20 L309.90 327.6 L309.00 340.00Z" fill="#f8f8c4" opacity="0.8"/>
<path d="M311.10 327.6 L312.00 319.12 L312.90 327.6 L312.00 336.08Z" fill="#f8f8c4" opacity="0.8"/>
<path d="M314.10 327.6 L315.00 318.73 L315.90 327.6 L315.00 336.47Z" fill="#f8f8c4" opacity="0.8"/>
<path d="M317.10 327.6 L318.00 316.99 L318.90 327.6 L318.00 338.21Z" fill="#f8f8c4" opacity="0.8"/>
<path d="M322.10 327.6 L323.00 313.04 L323.90 327.6 L323.00 342.16Z" fill="#f8f8c4" opacity="0.8"/>
<path d="M325.10 327.6 L326.00 315.65 L326.90 327.6 L326.00 339.55Z" fill="#f8f8c4" opacity="0.8"/>
<path d="M328.10 327.6 L329.00 318.75 L329.90 327.6 L329.00 336.45Z" fill="#f8f8c4" opacity="0.8"/>
<path d="M335.10 327.6 L336.00 313.06 L336.90 327.6 L336.00 342.14Z" fill="#f8f8c4" opacity="0.8"/>
<path d="M338.10 327.6 L339.00 317.15 L339.90 327.6 L339.00 338.05Z" fill="#f8f8c4" opacity="0.8"/>
<path d="M341.10 327.6 L342.00 315.10 L342.90 327.6 L342.00 340.10Z" fill="#f8f8c4" opacity="0.8"/>
<path d="M344.10 327.6 L345.00 317.40 L345.90 327.6 L345.00 337.80Z" fill="#f8f8c4" opacity="0.8"/>
<path d="M348.10 327.6 L349.00 316.92 L349.90 327.6 L349.00 338.28Z" fill="#f8f8c4" opacity="0.8"/>
<path d="M351.10 327.6 L352.00 316.23 L352.90 327.6 L352.00 338.97Z" fill="#f8f8c4" opacity="0.8"/>
<path d="M354.10 327.6 L355.00 317.91 L355.90 327.6 L355.00 337.29Z" fill="#f8f8c4" opacity="0.8"/>
<path d="M358.10 327.6 L359.00 318.95 L359.90 327.6 L359.00 336.25Z" fill="#f8f8c4" opacity="0.8"/>
<path d="M363.10 327.6 L364.00 316.86 L364.90 327.6 L364.00 338.34Z" fill="#f8f8c4" opacity="0.8"/>
<path d="M366.10 327.6 L367.00 317.53 L367.90 327.6 L367.00 337.67Z" fill="#f8f8c4" opacity="0.8"/>
<path d="M369.10 327.6 L370.00 314.85 L370.90 327.6 L370.00 340.35Z" fill="#f8f8c4" opacity="0.8"/>
<path d="M372.10 327.6 L373.00 315.42 L373.90 327.6 L373.00 339.78Z" fill="#f8f8c4" opacity="0.8"/>
</svg>
<div class="a" style="left:146.50px;top:348.18px;width:114.35px;height:45.58px;background:#4c0044;border-radius:1.5px"></div>
<div class="a" style="left:149.00px;top:349.93px;font-size:5.4px;line-height:1;font-weight:bold;color:#f0c6ee;white-space:nowrap;transform:scaleX(0.92);transform-origin:0 0;">Speakeasy</div>
<div class="a" style="left:147.25px;top:357.1px;width:113px;height:0.9px;background:#8e4286"></div>
<div class="a" style="left:149.75px;top:379.2px;width:1.4px;height:1.4px;background:#86408a"></div>
<div class="a" style="left:156.94px;top:379.2px;width:1.4px;height:1.4px;background:#86408a"></div>
<div class="a" style="left:164.13px;top:379.2px;width:1.4px;height:1.4px;background:#86408a"></div>
<div class="a" style="left:171.32px;top:379.2px;width:1.4px;height:1.4px;background:#86408a"></div>
<div class="a" style="left:178.51px;top:379.2px;width:1.4px;height:1.4px;background:#86408a"></div>
<div class="a" style="left:185.70px;top:379.2px;width:1.4px;height:1.4px;background:#86408a"></div>
<div class="a" style="left:192.89px;top:379.2px;width:1.4px;height:1.4px;background:#86408a"></div>
<div class="a" style="left:200.08px;top:379.2px;width:1.4px;height:1.4px;background:#86408a"></div>
<div class="a" style="left:207.27px;top:379.2px;width:1.4px;height:1.4px;background:#86408a"></div>
<div class="a" style="left:214.46px;top:379.2px;width:1.4px;height:1.4px;background:#86408a"></div>
<div class="a" style="left:221.65px;top:379.2px;width:1.4px;height:1.4px;background:#86408a"></div>
<div class="a" style="left:228.84px;top:379.2px;width:1.4px;height:1.4px;background:#86408a"></div>
<div class="a" style="left:236.03px;top:379.2px;width:1.4px;height:1.4px;background:#86408a"></div>
<div class="a" style="left:243.22px;top:379.2px;width:1.4px;height:1.4px;background:#86408a"></div>
<div class="a" style="left:250.41px;top:379.2px;width:1.4px;height:1.4px;background:#86408a"></div>
<div class="a" style="left:257.60px;top:379.2px;width:1.4px;height:1.4px;background:#86408a"></div>
<div class="a" style="left:173.25px;top:390.4px;width:1.4px;height:1.4px;background:#9a509a"></div>
<div class="a" style="left:177.75px;top:390.4px;width:1.4px;height:1.4px;background:#9a509a"></div>
<div class="a" style="left:202.25px;top:390.4px;width:1.4px;height:1.4px;background:#9a509a"></div>
<div class="a" style="left:206.25px;top:390.4px;width:1.4px;height:1.4px;background:#9a509a"></div>
<div class="a" style="left:231.25px;top:390.4px;width:1.4px;height:1.4px;background:#9a509a"></div>
<div class="a" style="left:235.25px;top:390.4px;width:1.4px;height:1.4px;background:#9a509a"></div>
<div class="a" style="left:252.25px;top:390.4px;width:1.4px;height:1.4px;background:#9a509a"></div>
<div class="a" style="left:256.75px;top:390.4px;width:1.4px;height:1.4px;background:#9a509a"></div>
<div class="a" style="left:261.50px;top:348.18px;width:114.35px;height:45.58px;background:#4c0044;border-radius:1.5px"></div>
<div class="a" style="left:264.00px;top:349.93px;font-size:5.4px;line-height:1;font-weight:bold;color:#f0c6ee;white-space:nowrap;transform:scaleX(0.92);transform-origin:0 0;">Speakeasy</div>
<div class="a" style="left:262.25px;top:357.1px;width:113px;height:0.9px;background:#8e4286"></div>
<div class="a" style="left:264.75px;top:379.2px;width:1.4px;height:1.4px;background:#86408a"></div>
<div class="a" style="left:271.94px;top:379.2px;width:1.4px;height:1.4px;background:#86408a"></div>
<div class="a" style="left:279.13px;top:379.2px;width:1.4px;height:1.4px;background:#86408a"></div>
<div class="a" style="left:286.32px;top:379.2px;width:1.4px;height:1.4px;background:#86408a"></div>
<div class="a" style="left:293.51px;top:379.2px;width:1.4px;height:1.4px;background:#86408a"></div>
<div class="a" style="left:300.70px;top:379.2px;width:1.4px;height:1.4px;background:#86408a"></div>
<div class="a" style="left:307.89px;top:379.2px;width:1.4px;height:1.4px;background:#86408a"></div>
<div class="a" style="left:315.08px;top:379.2px;width:1.4px;height:1.4px;background:#86408a"></div>
<div class="a" style="left:322.27px;top:379.2px;width:1.4px;height:1.4px;background:#86408a"></div>
<div class="a" style="left:329.46px;top:379.2px;width:1.4px;height:1.4px;background:#86408a"></div>
<div class="a" style="left:336.65px;top:379.2px;width:1.4px;height:1.4px;background:#86408a"></div>
<div class="a" style="left:343.84px;top:379.2px;width:1.4px;height:1.4px;background:#86408a"></div>
<div class="a" style="left:351.03px;top:379.2px;width:1.4px;height:1.4px;background:#86408a"></div>
<div class="a" style="left:358.22px;top:379.2px;width:1.4px;height:1.4px;background:#86408a"></div>
<div class="a" style="left:365.41px;top:379.2px;width:1.4px;height:1.4px;background:#86408a"></div>
<div class="a" style="left:372.60px;top:379.2px;width:1.4px;height:1.4px;background:#86408a"></div>
<div class="a" style="left:288.25px;top:390.4px;width:1.4px;height:1.4px;background:#9a509a"></div>
<div class="a" style="left:292.75px;top:390.4px;width:1.4px;height:1.4px;background:#9a509a"></div>
<div class="a" style="left:317.25px;top:390.4px;width:1.4px;height:1.4px;background:#9a509a"></div>
<div class="a" style="left:321.25px;top:390.4px;width:1.4px;height:1.4px;background:#9a509a"></div>
<div class="a" style="left:346.25px;top:390.4px;width:1.4px;height:1.4px;background:#9a509a"></div>
<div class="a" style="left:350.25px;top:390.4px;width:1.4px;height:1.4px;background:#9a509a"></div>
<div class="a" style="left:367.25px;top:390.4px;width:1.4px;height:1.4px;background:#9a509a"></div>
<div class="a" style="left:371.75px;top:390.4px;width:1.4px;height:1.4px;background:#9a509a"></div>
<div class="a" style="left:260.7px;top:47px;width:1.1px;height:353px;background:#e8e8e8"></div>
<svg class="a" style="left:257.2px;top:47.6px" width="8.2" height="8.2"><path d="M1.5 0.3 h5.2 q1.2 0 1.2 1.2 v1.6 q0 2.2 -3.8 4.8 q-3.8 -2.6 -3.8 -4.8 v-1.6 q0-1.2 1.2-1.2z" fill="#e2e2e2"/></svg>
<div class="a" style="left:260.7px;top:40px;width:1px;height:7.6px;background:#3a3020"></div>
<svg class="a" style="left:138.8px;top:190px" width="9" height="9" viewBox="0 0 15 15"><path d="M7.5 1 l2.6 2.8 h-1.6 v2.7 h2.7 v-1.6 l2.8 2.6 -2.8 2.6 v-1.6 h-2.7 v2.7 h1.6 l-2.6 2.8 -2.6-2.8 h1.6 v-2.7 h-2.7 v1.6 l-2.8-2.6 2.8-2.6 v1.6 h2.7 v-2.7 h-1.6z" fill="#111" stroke="#f4f4f4" stroke-width="1.1"/></svg>
</body></html>
